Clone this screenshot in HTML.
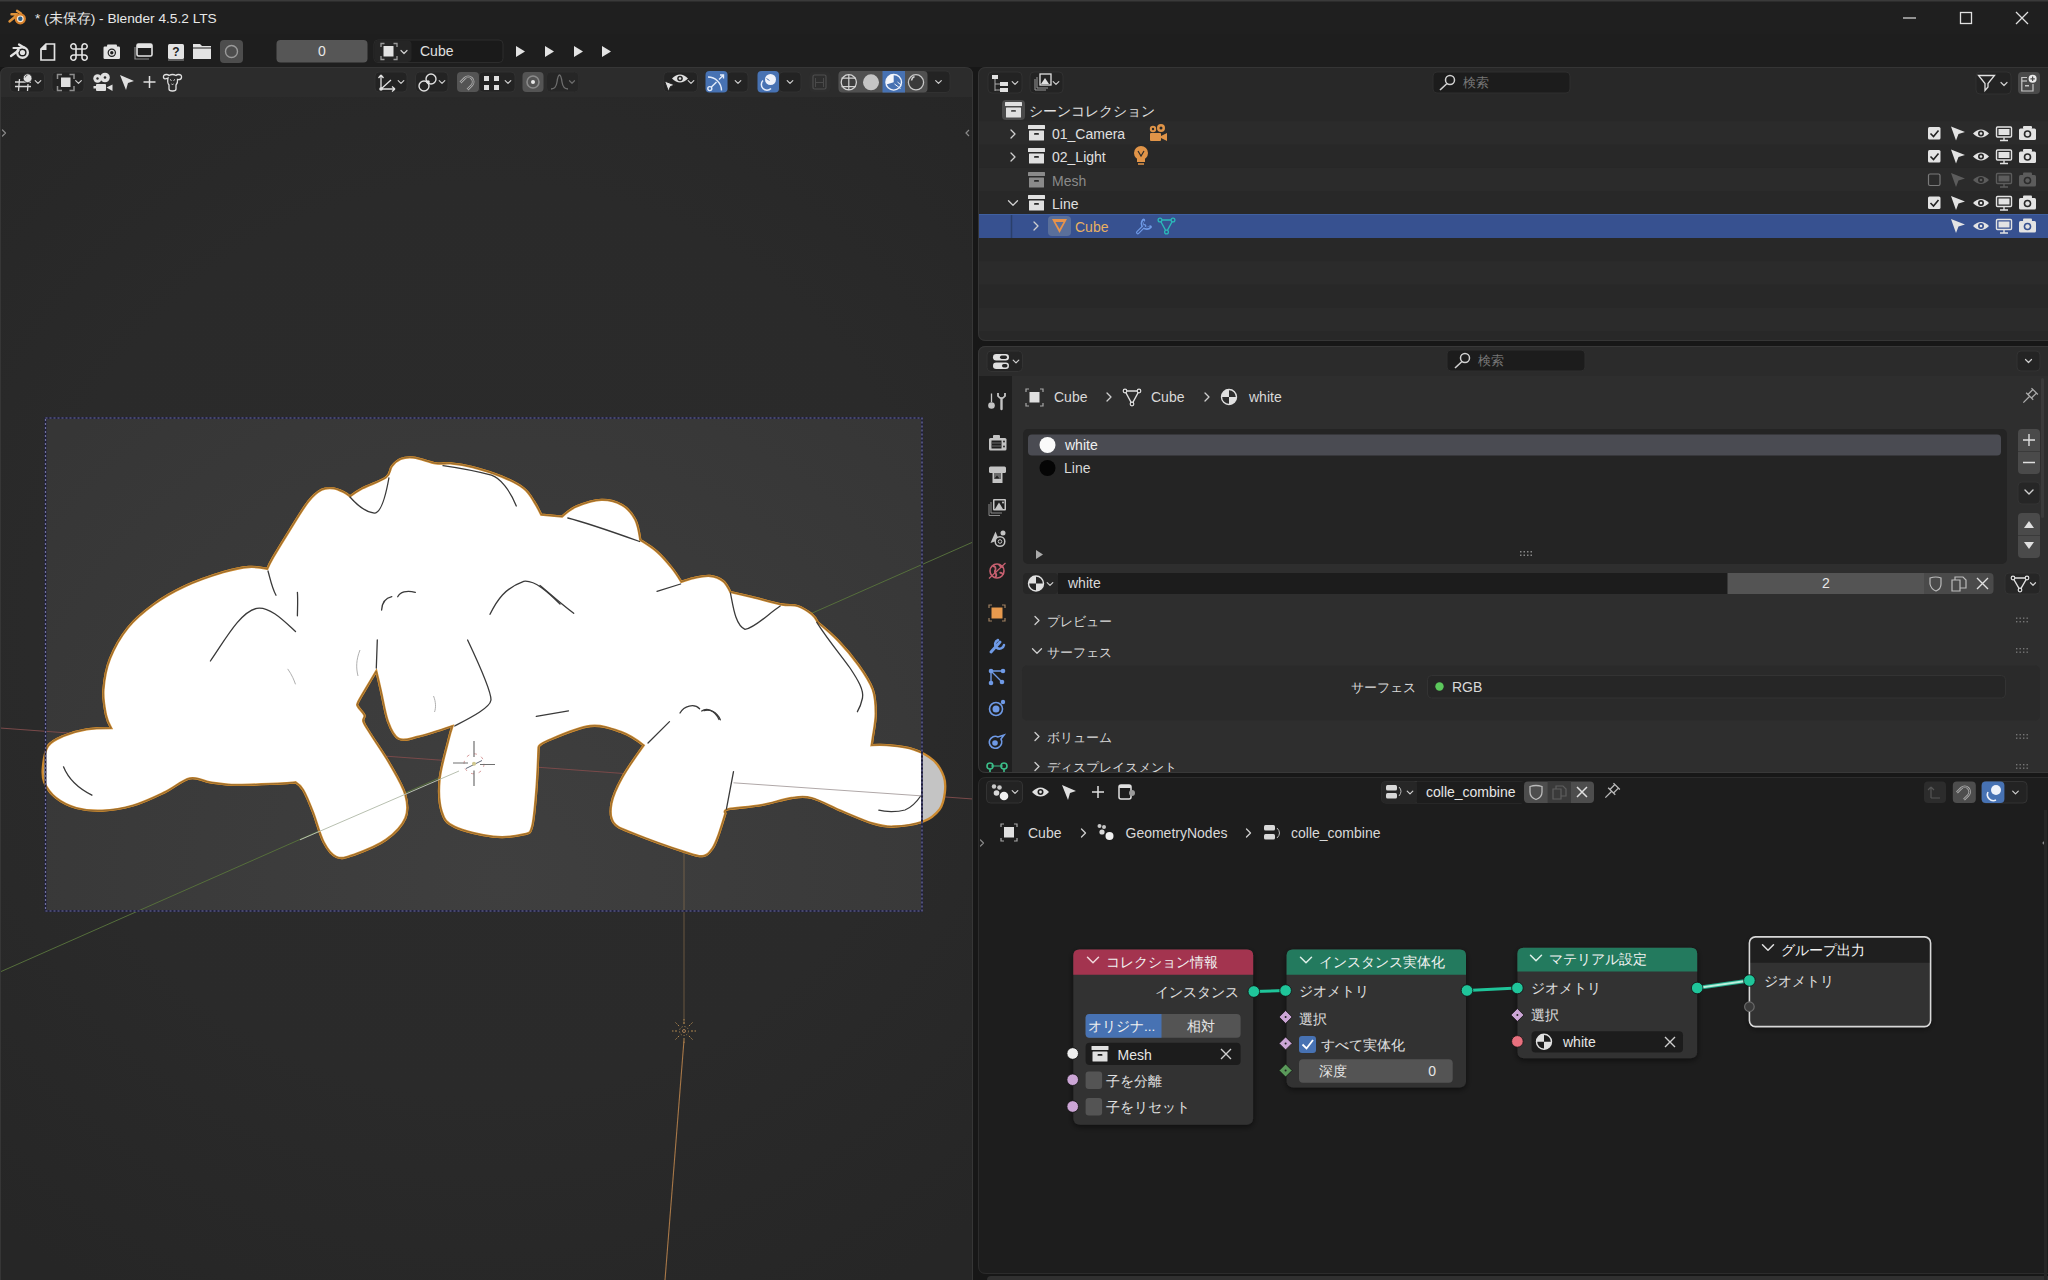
<!DOCTYPE html>
<html><head><meta charset="utf-8">
<style>
body{margin:0;width:2048px;height:1280px;overflow:hidden;background:#171717;position:relative}
svg{font-family:"Liberation Sans",sans-serif}
</style></head><body>
<svg width="2048" height="1280" viewBox="0 0 2048 1280" style="position:absolute;left:0;top:0"><rect x="0" y="0" width="2048" height="1280" rx="0" fill="#171717" />
<rect x="0" y="0" width="2048" height="34" rx="0" fill="#1f1f1f" />
<rect x="0" y="34" width="2048" height="33" rx="0" fill="#1e1e1e" />
<path d="M0,0.75 H2048" fill="none" stroke="#3a3a3a" stroke-width="1.5" />
<text x="35" y="23" font-size="13.7" fill="#e8e8e8" text-anchor="start" >* (未保存) - Blender 4.5.2 LTS</text>
<path d="M9.5,21.5 L16,16 M11.5,14.2 H17 M17,10.8 L21,13.5" fill="none" stroke="#e0933a" stroke-width="2.4" stroke-linecap="round"/>
<circle cx="20.3" cy="18.8" r="5.6" fill="#d9822b"/><circle cx="20.3" cy="18.8" r="3.4" fill="#fbe8d0"/><circle cx="20.3" cy="18.8" r="2.2" fill="#2a5d8a"/>
<path d="M1903,18 H1916" fill="none" stroke="#e0e0e0" stroke-width="1.2" />
<rect x="1960.5" y="12.5" width="11" height="11" rx="0" fill="none" stroke="#e0e0e0" stroke-width="1.3"/>
<path d="M2016,12 L2028,24 M2028,12 L2016,24" fill="none" stroke="#e0e0e0" stroke-width="1.3" />
<circle cx="22.5" cy="52.5" r="5.3" fill="none" stroke="#e3e3e3" stroke-width="2.4"/>
<circle cx="22.5" cy="52.5" r="2.6" fill="#e3e3e3"/>
<path d="M11,56 L18.5,50.5 M13.5,48 L19.5,48 M19,44.5 L24,47.5" fill="none" stroke="#e3e3e3" stroke-width="2.2" stroke-linecap="round"/>
<path d="M46,44 H54.5 V60 H41 V49 Z" fill="none" stroke="#e3e3e3" stroke-width="1.7" />
<path d="M40.5,50 L46.5,43.5 V50 Z" fill="#e3e3e3" stroke="none" stroke-width="1" />
<path d="M76,49 H82 V55 H76 Z M76,49 V46.5 A2.6,2.6 0 1 0 73.4,49 H76 M82,49 V46.5 A2.6,2.6 0 1 1 84.6,49 H82 M76,55 V57.5 A2.6,2.6 0 1 1 73.4,55 H76 M82,55 V57.5 A2.6,2.6 0 1 0 84.6,55 H82" fill="none" stroke="#e3e3e3" stroke-width="1.6" />
<rect x="103.5" y="46.5" width="16.5" height="12.5" rx="1.2" fill="#e3e3e3" />
<rect x="107" y="44.5" width="10" height="3" rx="1" fill="#e3e3e3" />
<circle cx="111.8" cy="52.7" r="4.2" fill="#1e1e1e"/><circle cx="111.8" cy="52.7" r="3" fill="#e3e3e3"/><circle cx="111.8" cy="52.7" r="1.7" fill="#1e1e1e"/>
<rect x="137" y="44" width="15" height="12" rx="1.5" fill="none" stroke="#e3e3e3" stroke-width="1.6"/>
<rect x="137" y="44" width="15" height="4" rx="1" fill="#e3e3e3" />
<path d="M135,47 V59 H149" fill="none" stroke="#8a8a8a" stroke-width="1.2" />
<rect x="168" y="44" width="16" height="15" rx="1.5" fill="#e3e3e3" />
<text x="176" y="56" font-size="12" fill="#1e1e1e" text-anchor="middle" font-weight="bold">?</text>
<path d="M168,60 H184" fill="none" stroke="#9a9a9a" stroke-width="1" />
<path d="M193,44 H200 L202,46 H211 V59 H193 Z" fill="#e3e3e3" stroke="none" stroke-width="1" />
<path d="M193,48 H211" fill="none" stroke="#1e1e1e" stroke-width="1" />
<rect x="220" y="40" width="23" height="23" rx="4" fill="#4d4d4d" />
<circle cx="231.5" cy="51.5" r="6" fill="none" stroke="#9a9a9a" stroke-width="1.4"/>
<rect x="276.5" y="40" width="91" height="22.5" rx="4" fill="#565656" />
<text x="322" y="56" font-size="14" fill="#e8e8e8" text-anchor="middle" >0</text>
<rect x="374" y="40" width="129" height="22.5" rx="4" fill="#1a1a1a" stroke="#2c2c2c" stroke-width="1"/>
<rect x="374.5" y="40.5" width="37" height="21.5" rx="4" fill="#252525" />
<path d="M381,47 V43.5 H384.5 M393.5,43.5 H397 V47 M381,56 V59.5 H384.5 M393.5,59.5 H397 V56" fill="none" stroke="#9a9a9a" stroke-width="1.3" />
<rect x="383.5" y="46" width="10" height="10.5" rx="0" fill="#e3e3e3" />
<path d="M401,50.5 L404,53.5 L407,50.5" fill="none" stroke="#cfcfcf" stroke-width="1.2" stroke-linecap="round" stroke-linejoin="round"/>
<text x="420" y="56" font-size="14" fill="#e0e0e0" text-anchor="start" >Cube</text>
<path d="M516,46 L525,51.5 L516,57 Z" fill="#e3e3e3" stroke="none" stroke-width="1" />
<path d="M545,46 L554,51.5 L545,57 Z" fill="#e3e3e3" stroke="none" stroke-width="1" />
<path d="M574,46 L583,51.5 L574,57 Z" fill="#e3e3e3" stroke="none" stroke-width="1" />
<path d="M602,46 L611,51.5 L602,57 Z" fill="#e3e3e3" stroke="none" stroke-width="1" />
<defs><clipPath id="vpclip"><path d="M0,75 Q0,67 8,67 H965 Q973,67 973,75 V1280 H0 Z"/></clipPath><clipPath id="cam2"><rect x="45.5" y="418" width="876.5" height="493"/></clipPath><radialGradient id="vpg" cx="0.5" cy="0.6" r="0.7"><stop offset="0" stop-color="#2c2c2c"/><stop offset="1" stop-color="#282828"/></radialGradient></defs>
<g clip-path="url(#vpclip)">
<defs><linearGradient id="vpbg" x1="0" y1="0" x2="0" y2="1"><stop offset="0" stop-color="#272727"/><stop offset="1" stop-color="#262626"/></linearGradient></defs>
<rect x="0" y="67" width="973" height="1213" rx="0" fill="url(#vpbg)" />
<rect x="0" y="67" width="973" height="30.5" rx="0" fill="#2c2c2c" />
<defs><radialGradient id="camg" gradientUnits="userSpaceOnUse" cx="500" cy="880" r="620"><stop offset="0" stop-color="#3f3f3f"/><stop offset="0.6" stop-color="#3a3a3a"/><stop offset="1" stop-color="#363636"/></radialGradient><radialGradient id="vpg2" gradientUnits="userSpaceOnUse" cx="486" cy="640" r="760"><stop offset="0" stop-color="#2b2b2b"/><stop offset="0.6" stop-color="#2a2a2a"/><stop offset="1" stop-color="#262626"/></radialGradient></defs>
<rect x="0" y="97" width="973" height="1183" rx="0" fill="url(#vpg2)" />
<rect x="45.5" y="418" width="876.5" height="493" rx="0" fill="url(#camg)" />
<line x1="0" y1="972" x2="973" y2="542" stroke="#566f3c" stroke-width="1"/>
<line x1="0" y1="728" x2="973" y2="799" stroke="#7a4a4a" stroke-width="1"/>
<line x1="684" y1="850" x2="684" y2="1024" stroke="#9a7a50" stroke-width="0.8" opacity="0.7"/>
<line x1="691.0" y1="1031.0" x2="696.0" y2="1031.0" stroke="#b08850" stroke-width="1" stroke-dasharray="2,1.5"/>
<line x1="688.9" y1="1035.9" x2="692.5" y2="1039.5" stroke="#b08850" stroke-width="1" stroke-dasharray="2,1.5"/>
<line x1="684.0" y1="1038.0" x2="684.0" y2="1043.0" stroke="#b08850" stroke-width="1" stroke-dasharray="2,1.5"/>
<line x1="679.1" y1="1035.9" x2="675.5" y2="1039.5" stroke="#b08850" stroke-width="1" stroke-dasharray="2,1.5"/>
<line x1="677.0" y1="1031.0" x2="672.0" y2="1031.0" stroke="#b08850" stroke-width="1" stroke-dasharray="2,1.5"/>
<line x1="679.1" y1="1026.1" x2="675.5" y2="1022.5" stroke="#b08850" stroke-width="1" stroke-dasharray="2,1.5"/>
<line x1="684.0" y1="1024.0" x2="684.0" y2="1019.0" stroke="#b08850" stroke-width="1" stroke-dasharray="2,1.5"/>
<line x1="688.9" y1="1026.1" x2="692.5" y2="1022.5" stroke="#b08850" stroke-width="1" stroke-dasharray="2,1.5"/>
<circle cx="684" cy="1031" r="4.5" fill="none" stroke="#a08050" stroke-width="0.8" stroke-dasharray="1.5,1.5"/><circle cx="684" cy="1031" r="1.5" fill="none" stroke="#c09060" stroke-width="0.8"/>
<line x1="684" y1="1040" x2="665" y2="1280" stroke="#a87848" stroke-width="1.1"/>
<path d="M42.9,766.8 C43.5,760.8 44.6,751.1 48.0,746.0 C51.4,740.9 57.0,738.8 63.5,736.0 C70.0,733.2 78.8,730.7 86.7,729.4 C94.7,728.1 111.2,728.1 111.2,728.1 C111.2,728.1 107.3,721.4 106.0,715.0 C104.7,708.6 102.8,698.9 103.5,689.5 C104.2,680.1 105.9,668.9 110.0,658.6 C114.1,648.3 120.7,636.6 128.0,627.6 C135.3,618.6 144.3,611.3 153.7,604.4 C163.1,597.5 173.0,591.8 184.6,586.4 C196.2,581.0 212.6,575.4 223.3,572.2 C234.0,569.0 241.7,567.5 249.0,567.0 C256.3,566.5 267.3,568.9 267.3,568.9 C267.3,568.9 269.5,563.6 273.2,557.2 C276.9,550.9 283.4,540.1 289.3,530.8 C295.2,521.5 302.9,508.3 308.3,501.5 C313.7,494.7 317.4,492.0 321.5,489.8 C325.6,487.6 329.5,487.9 333.2,488.3 C336.9,488.7 340.7,490.6 343.5,492.0 C346.3,493.4 350.0,496.4 350.0,496.4 C350.0,496.4 356.5,491.5 362.5,488.3 C368.5,485.1 381.1,481.0 386.0,477.4 C390.9,473.8 389.4,469.5 391.8,466.4 C394.2,463.3 396.9,460.5 400.6,459.0 C404.3,457.5 407.9,456.9 413.8,457.6 C419.7,458.3 429.7,462.4 435.8,463.4 C441.9,464.4 444.3,462.8 450.4,463.4 C456.5,464.0 463.8,464.9 472.4,467.1 C480.9,469.3 493.1,473.1 501.7,476.6 C510.2,480.1 518.3,484.2 523.7,488.3 C529.1,492.4 531.1,497.1 534.0,501.5 C536.9,505.9 541.2,514.7 541.2,514.7 C541.2,514.7 562.0,516.6 562.0,516.6 C562.0,516.6 570.0,509.2 576.6,506.4 C583.2,503.6 593.9,500.0 601.5,499.8 C609.1,499.6 616.4,501.7 622.0,505.0 C627.6,508.3 632.2,513.7 635.2,519.5 C638.2,525.3 640.3,540.0 640.3,540.0 C640.3,540.0 652.0,547.1 657.2,551.8 C662.5,556.4 667.8,562.9 671.8,567.9 C675.8,572.9 681.3,581.8 681.3,581.8 C681.3,581.8 689.0,579.1 693.8,578.1 C698.6,577.1 705.1,575.5 710.0,576.0 C714.9,576.5 719.6,578.3 723.0,581.0 C726.4,583.7 730.4,592.0 730.4,592.0 C730.4,592.0 743.8,595.1 752.4,597.2 C761.0,599.3 774.2,603.0 781.7,604.5 C789.2,606.0 792.5,604.4 797.5,606.0 C802.5,607.6 808.3,611.5 811.7,614.2 C815.1,616.9 817.8,622.3 817.8,622.3 C817.8,622.3 831.3,633.5 838.1,640.6 C844.9,647.7 852.6,656.9 858.4,665.0 C864.2,673.1 869.8,681.3 872.7,689.4 C875.6,697.5 875.7,705.7 875.7,713.8 C875.7,721.9 873.4,732.8 872.7,738.0 C872.0,743.2 871.6,745.2 871.6,745.2 C871.6,745.2 880.0,744.5 886.9,745.2 C893.8,745.9 905.5,746.8 913.3,749.3 C921.1,751.8 928.5,755.9 933.6,760.5 C938.7,765.1 941.9,771.3 943.8,776.7 C945.7,782.1 945.5,787.6 944.8,793.0 C944.1,798.4 943.3,804.5 939.7,809.2 C936.1,813.9 931.2,818.5 923.4,821.4 C915.6,824.3 901.5,826.2 893.0,826.5 C884.5,826.8 881.2,825.9 872.7,823.4 C864.2,820.9 852.4,815.5 842.2,811.3 C832.0,807.1 820.2,800.2 811.7,798.0 C803.2,795.8 799.9,796.8 791.4,798.0 C782.9,799.2 771.5,803.3 761.0,805.2 C750.5,807.1 734.3,807.9 728.4,809.2 C722.5,810.6 725.4,813.3 725.4,813.3 C725.4,813.3 720.4,829.8 718.3,835.6 C716.1,841.5 714.9,845.0 712.5,848.4 C710.1,851.8 708.2,855.2 703.9,855.9 C699.6,856.6 698.5,856.5 686.7,852.7 C674.9,848.9 645.2,838.3 633.0,833.3 C620.8,828.3 617.2,827.6 613.6,822.6 C610.0,817.6 610.1,810.8 611.5,803.3 C612.9,795.8 616.8,787.2 622.2,777.5 C627.6,767.8 643.7,745.3 643.7,745.3 C643.7,745.3 631.2,735.6 622.2,732.4 C613.2,729.2 602.5,724.6 590.0,726.0 C577.5,727.4 555.6,737.4 547.0,741.0 C538.4,744.6 538.5,747.4 538.5,747.4 C538.5,747.4 537.4,777.1 536.3,790.4 C535.2,803.6 534.1,819.6 532.0,826.9 C529.9,834.2 529.9,832.8 523.4,834.4 C516.9,836.0 504.8,837.9 493.3,836.6 C481.9,835.4 463.3,831.0 454.7,826.9 C446.1,822.8 444.3,819.8 441.8,811.9 C439.3,804.0 438.5,791.4 439.6,779.6 C440.7,767.8 446.1,749.9 448.2,741.0 C450.3,732.1 452.5,726.0 452.5,726.0 C452.5,726.0 427.1,734.6 418.2,736.7 C409.2,738.8 403.8,741.3 398.8,738.8 C393.8,736.3 391.0,729.8 388.0,721.6 C385.0,713.4 382.6,697.8 380.6,689.4 C378.7,681.0 376.3,671.1 376.3,671.1 C376.3,671.1 369.7,682.1 366.6,687.3 C363.6,692.5 359.4,699.1 358.0,702.3 C356.6,705.5 356.9,704.5 358.0,706.6 C359.1,708.8 363.5,712.7 364.4,715.2 C365.3,717.7 362.3,718.4 363.4,721.6 C364.5,724.8 366.4,727.3 370.9,734.5 C375.4,741.7 384.5,754.6 390.2,764.6 C395.9,774.6 402.8,785.8 405.3,794.7 C407.8,803.7 408.5,810.8 405.3,818.3 C402.1,825.8 394.6,833.7 386.0,839.8 C377.4,845.9 361.9,851.9 353.7,854.8 C345.4,857.7 341.5,859.1 336.5,857.0 C331.5,854.9 327.5,849.5 323.6,842.0 C319.7,834.5 316.3,820.6 312.9,811.9 C309.5,803.2 306.1,794.9 303.2,790.0 C300.3,785.1 295.5,782.3 295.5,782.3 C295.5,782.3 287.3,783.2 277.4,783.6 C267.5,784.0 247.4,785.1 236.2,784.9 C225.0,784.7 218.1,783.4 210.4,782.3 C202.7,781.2 197.5,776.7 189.8,778.4 C182.1,780.1 173.5,788.1 164.0,792.6 C154.5,797.1 143.3,802.5 133.0,805.5 C122.7,808.5 111.4,810.2 102.0,810.6 C92.6,811.0 84.1,810.1 76.4,808.0 C68.7,805.9 61.2,802.0 55.8,797.7 C50.4,793.4 46.4,787.4 44.2,782.3 C42.1,777.1 42.3,772.8 42.9,766.8Z" fill="#c4c4c4" stroke="#cc8a30" stroke-width="2.3" />
<g clip-path="url(#cam2)">
<path d="M42.9,766.8 C43.5,760.8 44.6,751.1 48.0,746.0 C51.4,740.9 57.0,738.8 63.5,736.0 C70.0,733.2 78.8,730.7 86.7,729.4 C94.7,728.1 111.2,728.1 111.2,728.1 C111.2,728.1 107.3,721.4 106.0,715.0 C104.7,708.6 102.8,698.9 103.5,689.5 C104.2,680.1 105.9,668.9 110.0,658.6 C114.1,648.3 120.7,636.6 128.0,627.6 C135.3,618.6 144.3,611.3 153.7,604.4 C163.1,597.5 173.0,591.8 184.6,586.4 C196.2,581.0 212.6,575.4 223.3,572.2 C234.0,569.0 241.7,567.5 249.0,567.0 C256.3,566.5 267.3,568.9 267.3,568.9 C267.3,568.9 269.5,563.6 273.2,557.2 C276.9,550.9 283.4,540.1 289.3,530.8 C295.2,521.5 302.9,508.3 308.3,501.5 C313.7,494.7 317.4,492.0 321.5,489.8 C325.6,487.6 329.5,487.9 333.2,488.3 C336.9,488.7 340.7,490.6 343.5,492.0 C346.3,493.4 350.0,496.4 350.0,496.4 C350.0,496.4 356.5,491.5 362.5,488.3 C368.5,485.1 381.1,481.0 386.0,477.4 C390.9,473.8 389.4,469.5 391.8,466.4 C394.2,463.3 396.9,460.5 400.6,459.0 C404.3,457.5 407.9,456.9 413.8,457.6 C419.7,458.3 429.7,462.4 435.8,463.4 C441.9,464.4 444.3,462.8 450.4,463.4 C456.5,464.0 463.8,464.9 472.4,467.1 C480.9,469.3 493.1,473.1 501.7,476.6 C510.2,480.1 518.3,484.2 523.7,488.3 C529.1,492.4 531.1,497.1 534.0,501.5 C536.9,505.9 541.2,514.7 541.2,514.7 C541.2,514.7 562.0,516.6 562.0,516.6 C562.0,516.6 570.0,509.2 576.6,506.4 C583.2,503.6 593.9,500.0 601.5,499.8 C609.1,499.6 616.4,501.7 622.0,505.0 C627.6,508.3 632.2,513.7 635.2,519.5 C638.2,525.3 640.3,540.0 640.3,540.0 C640.3,540.0 652.0,547.1 657.2,551.8 C662.5,556.4 667.8,562.9 671.8,567.9 C675.8,572.9 681.3,581.8 681.3,581.8 C681.3,581.8 689.0,579.1 693.8,578.1 C698.6,577.1 705.1,575.5 710.0,576.0 C714.9,576.5 719.6,578.3 723.0,581.0 C726.4,583.7 730.4,592.0 730.4,592.0 C730.4,592.0 743.8,595.1 752.4,597.2 C761.0,599.3 774.2,603.0 781.7,604.5 C789.2,606.0 792.5,604.4 797.5,606.0 C802.5,607.6 808.3,611.5 811.7,614.2 C815.1,616.9 817.8,622.3 817.8,622.3 C817.8,622.3 831.3,633.5 838.1,640.6 C844.9,647.7 852.6,656.9 858.4,665.0 C864.2,673.1 869.8,681.3 872.7,689.4 C875.6,697.5 875.7,705.7 875.7,713.8 C875.7,721.9 873.4,732.8 872.7,738.0 C872.0,743.2 871.6,745.2 871.6,745.2 C871.6,745.2 880.0,744.5 886.9,745.2 C893.8,745.9 905.5,746.8 913.3,749.3 C921.1,751.8 928.5,755.9 933.6,760.5 C938.7,765.1 941.9,771.3 943.8,776.7 C945.7,782.1 945.5,787.6 944.8,793.0 C944.1,798.4 943.3,804.5 939.7,809.2 C936.1,813.9 931.2,818.5 923.4,821.4 C915.6,824.3 901.5,826.2 893.0,826.5 C884.5,826.8 881.2,825.9 872.7,823.4 C864.2,820.9 852.4,815.5 842.2,811.3 C832.0,807.1 820.2,800.2 811.7,798.0 C803.2,795.8 799.9,796.8 791.4,798.0 C782.9,799.2 771.5,803.3 761.0,805.2 C750.5,807.1 734.3,807.9 728.4,809.2 C722.5,810.6 725.4,813.3 725.4,813.3 C725.4,813.3 720.4,829.8 718.3,835.6 C716.1,841.5 714.9,845.0 712.5,848.4 C710.1,851.8 708.2,855.2 703.9,855.9 C699.6,856.6 698.5,856.5 686.7,852.7 C674.9,848.9 645.2,838.3 633.0,833.3 C620.8,828.3 617.2,827.6 613.6,822.6 C610.0,817.6 610.1,810.8 611.5,803.3 C612.9,795.8 616.8,787.2 622.2,777.5 C627.6,767.8 643.7,745.3 643.7,745.3 C643.7,745.3 631.2,735.6 622.2,732.4 C613.2,729.2 602.5,724.6 590.0,726.0 C577.5,727.4 555.6,737.4 547.0,741.0 C538.4,744.6 538.5,747.4 538.5,747.4 C538.5,747.4 537.4,777.1 536.3,790.4 C535.2,803.6 534.1,819.6 532.0,826.9 C529.9,834.2 529.9,832.8 523.4,834.4 C516.9,836.0 504.8,837.9 493.3,836.6 C481.9,835.4 463.3,831.0 454.7,826.9 C446.1,822.8 444.3,819.8 441.8,811.9 C439.3,804.0 438.5,791.4 439.6,779.6 C440.7,767.8 446.1,749.9 448.2,741.0 C450.3,732.1 452.5,726.0 452.5,726.0 C452.5,726.0 427.1,734.6 418.2,736.7 C409.2,738.8 403.8,741.3 398.8,738.8 C393.8,736.3 391.0,729.8 388.0,721.6 C385.0,713.4 382.6,697.8 380.6,689.4 C378.7,681.0 376.3,671.1 376.3,671.1 C376.3,671.1 369.7,682.1 366.6,687.3 C363.6,692.5 359.4,699.1 358.0,702.3 C356.6,705.5 356.9,704.5 358.0,706.6 C359.1,708.8 363.5,712.7 364.4,715.2 C365.3,717.7 362.3,718.4 363.4,721.6 C364.5,724.8 366.4,727.3 370.9,734.5 C375.4,741.7 384.5,754.6 390.2,764.6 C395.9,774.6 402.8,785.8 405.3,794.7 C407.8,803.7 408.5,810.8 405.3,818.3 C402.1,825.8 394.6,833.7 386.0,839.8 C377.4,845.9 361.9,851.9 353.7,854.8 C345.4,857.7 341.5,859.1 336.5,857.0 C331.5,854.9 327.5,849.5 323.6,842.0 C319.7,834.5 316.3,820.6 312.9,811.9 C309.5,803.2 306.1,794.9 303.2,790.0 C300.3,785.1 295.5,782.3 295.5,782.3 C295.5,782.3 287.3,783.2 277.4,783.6 C267.5,784.0 247.4,785.1 236.2,784.9 C225.0,784.7 218.1,783.4 210.4,782.3 C202.7,781.2 197.5,776.7 189.8,778.4 C182.1,780.1 173.5,788.1 164.0,792.6 C154.5,797.1 143.3,802.5 133.0,805.5 C122.7,808.5 111.4,810.2 102.0,810.6 C92.6,811.0 84.1,810.1 76.4,808.0 C68.7,805.9 61.2,802.0 55.8,797.7 C50.4,793.4 46.4,787.4 44.2,782.3 C42.1,777.1 42.3,772.8 42.9,766.8Z" fill="#ffffff" stroke="#cc8a30" stroke-width="2.3" />
<path d="M42.9,766.8 C43.5,760.8 44.6,751.1 48.0,746.0 C51.4,740.9 57.0,738.8 63.5,736.0 C70.0,733.2 78.8,730.7 86.7,729.4 C94.7,728.1 111.2,728.1 111.2,728.1 C111.2,728.1 107.3,721.4 106.0,715.0 C104.7,708.6 102.8,698.9 103.5,689.5 C104.2,680.1 105.9,668.9 110.0,658.6 C114.1,648.3 120.7,636.6 128.0,627.6 C135.3,618.6 144.3,611.3 153.7,604.4 C163.1,597.5 173.0,591.8 184.6,586.4 C196.2,581.0 212.6,575.4 223.3,572.2 C234.0,569.0 241.7,567.5 249.0,567.0 C256.3,566.5 267.3,568.9 267.3,568.9 C267.3,568.9 269.5,563.6 273.2,557.2 C276.9,550.9 283.4,540.1 289.3,530.8 C295.2,521.5 302.9,508.3 308.3,501.5 C313.7,494.7 317.4,492.0 321.5,489.8 C325.6,487.6 329.5,487.9 333.2,488.3 C336.9,488.7 340.7,490.6 343.5,492.0 C346.3,493.4 350.0,496.4 350.0,496.4 C350.0,496.4 356.5,491.5 362.5,488.3 C368.5,485.1 381.1,481.0 386.0,477.4 C390.9,473.8 389.4,469.5 391.8,466.4 C394.2,463.3 396.9,460.5 400.6,459.0 C404.3,457.5 407.9,456.9 413.8,457.6 C419.7,458.3 429.7,462.4 435.8,463.4 C441.9,464.4 444.3,462.8 450.4,463.4 C456.5,464.0 463.8,464.9 472.4,467.1 C480.9,469.3 493.1,473.1 501.7,476.6 C510.2,480.1 518.3,484.2 523.7,488.3 C529.1,492.4 531.1,497.1 534.0,501.5 C536.9,505.9 541.2,514.7 541.2,514.7 C541.2,514.7 562.0,516.6 562.0,516.6 C562.0,516.6 570.0,509.2 576.6,506.4 C583.2,503.6 593.9,500.0 601.5,499.8 C609.1,499.6 616.4,501.7 622.0,505.0 C627.6,508.3 632.2,513.7 635.2,519.5 C638.2,525.3 640.3,540.0 640.3,540.0 C640.3,540.0 652.0,547.1 657.2,551.8 C662.5,556.4 667.8,562.9 671.8,567.9 C675.8,572.9 681.3,581.8 681.3,581.8 C681.3,581.8 689.0,579.1 693.8,578.1 C698.6,577.1 705.1,575.5 710.0,576.0 C714.9,576.5 719.6,578.3 723.0,581.0 C726.4,583.7 730.4,592.0 730.4,592.0 C730.4,592.0 743.8,595.1 752.4,597.2 C761.0,599.3 774.2,603.0 781.7,604.5 C789.2,606.0 792.5,604.4 797.5,606.0 C802.5,607.6 808.3,611.5 811.7,614.2 C815.1,616.9 817.8,622.3 817.8,622.3 C817.8,622.3 831.3,633.5 838.1,640.6 C844.9,647.7 852.6,656.9 858.4,665.0 C864.2,673.1 869.8,681.3 872.7,689.4 C875.6,697.5 875.7,705.7 875.7,713.8 C875.7,721.9 873.4,732.8 872.7,738.0 C872.0,743.2 871.6,745.2 871.6,745.2 C871.6,745.2 880.0,744.5 886.9,745.2 C893.8,745.9 905.5,746.8 913.3,749.3 C921.1,751.8 928.5,755.9 933.6,760.5 C938.7,765.1 941.9,771.3 943.8,776.7 C945.7,782.1 945.5,787.6 944.8,793.0 C944.1,798.4 943.3,804.5 939.7,809.2 C936.1,813.9 931.2,818.5 923.4,821.4 C915.6,824.3 901.5,826.2 893.0,826.5 C884.5,826.8 881.2,825.9 872.7,823.4 C864.2,820.9 852.4,815.5 842.2,811.3 C832.0,807.1 820.2,800.2 811.7,798.0 C803.2,795.8 799.9,796.8 791.4,798.0 C782.9,799.2 771.5,803.3 761.0,805.2 C750.5,807.1 734.3,807.9 728.4,809.2 C722.5,810.6 725.4,813.3 725.4,813.3 C725.4,813.3 720.4,829.8 718.3,835.6 C716.1,841.5 714.9,845.0 712.5,848.4 C710.1,851.8 708.2,855.2 703.9,855.9 C699.6,856.6 698.5,856.5 686.7,852.7 C674.9,848.9 645.2,838.3 633.0,833.3 C620.8,828.3 617.2,827.6 613.6,822.6 C610.0,817.6 610.1,810.8 611.5,803.3 C612.9,795.8 616.8,787.2 622.2,777.5 C627.6,767.8 643.7,745.3 643.7,745.3 C643.7,745.3 631.2,735.6 622.2,732.4 C613.2,729.2 602.5,724.6 590.0,726.0 C577.5,727.4 555.6,737.4 547.0,741.0 C538.4,744.6 538.5,747.4 538.5,747.4 C538.5,747.4 537.4,777.1 536.3,790.4 C535.2,803.6 534.1,819.6 532.0,826.9 C529.9,834.2 529.9,832.8 523.4,834.4 C516.9,836.0 504.8,837.9 493.3,836.6 C481.9,835.4 463.3,831.0 454.7,826.9 C446.1,822.8 444.3,819.8 441.8,811.9 C439.3,804.0 438.5,791.4 439.6,779.6 C440.7,767.8 446.1,749.9 448.2,741.0 C450.3,732.1 452.5,726.0 452.5,726.0 C452.5,726.0 427.1,734.6 418.2,736.7 C409.2,738.8 403.8,741.3 398.8,738.8 C393.8,736.3 391.0,729.8 388.0,721.6 C385.0,713.4 382.6,697.8 380.6,689.4 C378.7,681.0 376.3,671.1 376.3,671.1 C376.3,671.1 369.7,682.1 366.6,687.3 C363.6,692.5 359.4,699.1 358.0,702.3 C356.6,705.5 356.9,704.5 358.0,706.6 C359.1,708.8 363.5,712.7 364.4,715.2 C365.3,717.7 362.3,718.4 363.4,721.6 C364.5,724.8 366.4,727.3 370.9,734.5 C375.4,741.7 384.5,754.6 390.2,764.6 C395.9,774.6 402.8,785.8 405.3,794.7 C407.8,803.7 408.5,810.8 405.3,818.3 C402.1,825.8 394.6,833.7 386.0,839.8 C377.4,845.9 361.9,851.9 353.7,854.8 C345.4,857.7 341.5,859.1 336.5,857.0 C331.5,854.9 327.5,849.5 323.6,842.0 C319.7,834.5 316.3,820.6 312.9,811.9 C309.5,803.2 306.1,794.9 303.2,790.0 C300.3,785.1 295.5,782.3 295.5,782.3 C295.5,782.3 287.3,783.2 277.4,783.6 C267.5,784.0 247.4,785.1 236.2,784.9 C225.0,784.7 218.1,783.4 210.4,782.3 C202.7,781.2 197.5,776.7 189.8,778.4 C182.1,780.1 173.5,788.1 164.0,792.6 C154.5,797.1 143.3,802.5 133.0,805.5 C122.7,808.5 111.4,810.2 102.0,810.6 C92.6,811.0 84.1,810.1 76.4,808.0 C68.7,805.9 61.2,802.0 55.8,797.7 C50.4,793.4 46.4,787.4 44.2,782.3 C42.1,777.1 42.3,772.8 42.9,766.8Z" fill="none" stroke="#7a5a30" stroke-width="0.7" />
<path d="M287.7,668.9 C292,675 294,680 295.5,684.3" fill="none" stroke="#b0b0b0" stroke-width="1" />
<path d="M433.5,696 C436,702 436,708 434.5,712" fill="none" stroke="#b0b0b0" stroke-width="1" />
<path d="M360,650 C356,660 356,668 358,676" fill="none" stroke="#b0b0b0" stroke-width="1" />
<path d="M350,497 C357,505 366,512 374.3,513.2 C380,513 385,500 388.9,478" fill="none" stroke="#3a3a3a" stroke-width="1.3" stroke-linecap="round"/>
<path d="M443,465.6 C460,468 480,472 491.4,475.2 C500,478 510,490 516.3,506" fill="none" stroke="#3a3a3a" stroke-width="1.3" stroke-linecap="round"/>
<path d="M268,571 C270,578 272,588 276,595.3" fill="none" stroke="#3a3a3a" stroke-width="1.3" stroke-linecap="round"/>
<path d="M297.4,592.3 C298,600 297.5,608 297.4,615.8" fill="none" stroke="#3a3a3a" stroke-width="1.3" stroke-linecap="round"/>
<path d="M381.6,610 C382,603 386,598 391.8,596.7 M397.7,596.7 C400,592 406.5,590 415.3,592.3" fill="none" stroke="#3a3a3a" stroke-width="1.3" stroke-linecap="round"/>
<path d="M490,614.3 C497,600 505,588 523.7,581.3 C535,580 548,592 560,604" fill="none" stroke="#3a3a3a" stroke-width="1.3" stroke-linecap="round"/>
<path d="M567.8,518 C580,521 598.6,526.9 639.6,541.5" fill="none" stroke="#3a3a3a" stroke-width="1.3" stroke-linecap="round"/>
<path d="M540,585.5 C548,592 560,603 573.7,613.3" fill="none" stroke="#3a3a3a" stroke-width="1.3" stroke-linecap="round"/>
<path d="M657,591.3 L680.6,584" fill="none" stroke="#3a3a3a" stroke-width="1.3" stroke-linecap="round"/>
<path d="M730.4,592.8 C733,605 735,625 745,629.4 C755,628 768,614 780.2,606" fill="none" stroke="#3a3a3a" stroke-width="1.3" stroke-linecap="round"/>
<path d="M816.8,622.3 C828,640 842.2,656.9 850,668 C858,680 864,690 862.5,698 C861,705 859,709 857.4,711.7" fill="none" stroke="#3a3a3a" stroke-width="1.3" stroke-linecap="round"/>
<path d="M704,710.7 C710,709 717,712 720.3,719.8" fill="none" stroke="#3a3a3a" stroke-width="1.3" stroke-linecap="round"/>
<path d="M733.5,771.6 L726.4,809.2" fill="none" stroke="#3a3a3a" stroke-width="1.3" stroke-linecap="round"/>
<path d="M878.8,810.2 C885,812 897,812.3 905,810 C913,807 918,800 921.4,795" fill="none" stroke="#3a3a3a" stroke-width="1.3" stroke-linecap="round"/>
<path d="M377.3,640 L376.3,668" fill="none" stroke="#3a3a3a" stroke-width="1.3" stroke-linecap="round"/>
<path d="M467.6,640 C478,662 491.2,691.6 491,700 C490,708 470,718 454.7,726" fill="none" stroke="#3a3a3a" stroke-width="1.3" stroke-linecap="round"/>
<path d="M536.3,716.3 L568.5,710.9" fill="none" stroke="#3a3a3a" stroke-width="1.3" stroke-linecap="round"/>
<path d="M648,743 L669.5,721.6" fill="none" stroke="#3a3a3a" stroke-width="1.3" stroke-linecap="round"/>
<path d="M680,713 C684,706 694,703 699.6,708.7 M701.7,711 C706,708 714,709 719,719.5" fill="none" stroke="#3a3a3a" stroke-width="1.3" stroke-linecap="round"/>
<path d="M63.5,766.8 C68,778 76.4,787.4 91.9,795.2" fill="none" stroke="#3a3a3a" stroke-width="1.3" stroke-linecap="round"/>
<path d="M210.4,661 C225,640 240,612 256.8,608.3 C270,606 285,622 295.5,631.5" fill="none" stroke="#3a3a3a" stroke-width="1.3" stroke-linecap="round"/>
</g>
<line x1="300" y1="839.8" x2="459" y2="771" stroke="#b8c0b0" stroke-width="1"/>
<line x1="733.5" y1="782.8" x2="923.4" y2="796" stroke="#b0a8a8" stroke-width="1"/>
<rect x="45.5" y="418" width="876.5" height="493" rx="0" fill="none" stroke="#20203a" stroke-width="2"/>
<rect x="45.5" y="418" width="876.5" height="493" rx="0" fill="none" stroke="#7070a0" stroke-width="1.2" stroke-dasharray="2,2"/>
<path d="M972.5,1280 V75 Q972.5,67.5 965,67.5 H8 Q0.5,67.5 0.5,75 V1280" fill="none" stroke="#363636" stroke-width="1" />
</g>
<rect x="10" y="72" width="34.5" height="20" rx="4" fill="#232323" stroke="#313131" stroke-width="1"/>
<path d="M15,82 H31 M15,86.5 H31 M19.5,79 L18.5,91 M28,84 L27.5,91" fill="none" stroke="#d8d8d8" stroke-width="1.3" />
<circle cx="27.6" cy="78.2" r="4.4" fill="#e0e0e0" stroke="#232323" stroke-width="0.8"/>
<path d="M25.2,77.5 A2.6,2.6 0 0 1 27.5,75.2" fill="none" stroke="#555" stroke-width="0.9" />
<path d="M35.2,80.6 L38,83.4 L40.8,80.6" fill="none" stroke="#cfcfcf" stroke-width="1.2" stroke-linecap="round" stroke-linejoin="round"/>
<rect x="52" y="72" width="32" height="20" rx="4" fill="#232323" stroke="#313131" stroke-width="1"/>
<path d="M57.5,79 V74.5 H62 M69.5,74.5 H74 V79 M57.5,86 V90.5 H62 M69.5,90.5 H74 V86" fill="none" stroke="#8e8e8e" stroke-width="1.5" />
<rect x="61" y="77.5" width="9.5" height="9.5" rx="0" fill="#e0e0e0" />
<path d="M75.7,80.6 L78.5,83.4 L81.3,80.6" fill="none" stroke="#cfcfcf" stroke-width="1.2" stroke-linecap="round" stroke-linejoin="round"/>
<circle cx="97.5" cy="78.5" r="4.2" fill="#e0e0e0"/><circle cx="105" cy="77.5" r="4.8" fill="#e0e0e0"/><circle cx="97.5" cy="78.5" r="1.2" fill="#2c2c2c"/><circle cx="105" cy="77.5" r="1.3" fill="#2c2c2c"/>
<rect x="96" y="84" width="10" height="7" rx="1" fill="#e0e0e0" />
<path d="M106.5,87.5 L112.5,84.5 V91 Z" fill="#e0e0e0" stroke="none" stroke-width="1" />
<path d="M93.5,86 H96 V88.5 H93.5 Z" fill="#e0e0e0" stroke="none" stroke-width="1" />
<path d="M120,75 L134,81 L128,83 L126,90 Z" fill="#e0e0e0" stroke="none" stroke-width="1" />
<path d="M149.5,76 V88 M143.5,82 H155.5" fill="none" stroke="#e0e0e0" stroke-width="1.5" />
<path d="M168,78 Q164,80 163.5,77.5 Q163,74.5 166.5,74.5 Q168,74.5 169,75.5 Q172.5,73.5 176,75.5 Q177,74.5 178.5,74.5 Q182,74.5 181.5,77.5 Q181,80 177.5,79.5 Q178,83 176,85 V89 Q176,91 172.5,91 Q169,91 169,89 V85 Q167,83 168,78 Z" fill="none" stroke="#e0e0e0" stroke-width="1.3" />
<path d="M170,79.5 L171.5,80.5 M175,79.5 L173.5,80.5 M171.5,84 Q172.5,85 173.5,84" fill="none" stroke="#e0e0e0" stroke-width="1" />
<rect x="375" y="72" width="32" height="20" rx="4" fill="#232323" stroke="#313131" stroke-width="1"/>
<path d="M381,89 V75 M381,75 l-2.5,3 M381,75 l2.5,3 M381,89 H395 M395,89 l-3,-2.5 M395,89 l-3,2.5 M381,89 L391,80" fill="none" stroke="#e0e0e0" stroke-width="1.3" />
<circle cx="381" cy="89" r="1.8" fill="#e0e0e0"/>
<path d="M398.2,80.6 L401,83.4 L403.8,80.6" fill="none" stroke="#cfcfcf" stroke-width="1.2" stroke-linecap="round" stroke-linejoin="round"/>
<rect x="415.5" y="72" width="32.5" height="20" rx="4" fill="#232323" stroke="#313131" stroke-width="1"/>
<circle cx="424" cy="86" r="5" fill="none" stroke="#e0e0e0" stroke-width="1.4"/><circle cx="431" cy="79" r="5" fill="none" stroke="#e0e0e0" stroke-width="1.4"/><circle cx="428" cy="82" r="1.8" fill="#e0e0e0"/>
<path d="M439.2,80.6 L442,83.4 L444.8,80.6" fill="none" stroke="#cfcfcf" stroke-width="1.2" stroke-linecap="round" stroke-linejoin="round"/>
<rect x="479" y="72" width="36" height="20" rx="4" fill="#232323" stroke="#313131" stroke-width="1"/>
<rect x="457" y="72" width="22" height="20" rx="4" fill="#545454" />
<g transform="translate(467.5,82.5) rotate(45)"><path d="M-5,5 V-1 A5,5 0 0 1 5,-1 V5" fill="none" stroke="#a8a8a8" stroke-width="2.6"/><path d="M-5,5 V-1 A5,5 0 0 1 5,-1 V5" fill="none" stroke="#545454" stroke-width="0.9"/></g>
<rect x="484" y="76" width="5" height="5" rx="0" fill="#e0e0e0" />
<rect x="494" y="76" width="5" height="5" rx="0" fill="#e0e0e0" />
<rect x="484" y="85" width="5" height="5" rx="0" fill="#e0e0e0" />
<rect x="494" y="85" width="5" height="5" rx="0" fill="#e0e0e0" />
<path d="M505.2,80.6 L508,83.4 L510.8,80.6" fill="none" stroke="#cfcfcf" stroke-width="1.2" stroke-linecap="round" stroke-linejoin="round"/>
<rect x="522.5" y="72" width="21" height="20" rx="4" fill="#545454" />
<circle cx="533" cy="82" r="6" fill="none" stroke="#8a8a8a" stroke-width="1.6"/><circle cx="533" cy="82" r="2" fill="#e8e8e8"/>
<rect x="546.7" y="72" width="32.0" height="20" rx="4" fill="#262626" stroke="#2e2e2e" stroke-width="1"/>
<path d="M551,89 Q556,89 557,82 Q558,75 559.5,75 Q561,75 562,82 Q563,89 568,89" fill="none" stroke="#6e6e6e" stroke-width="1.3" />
<path d="M569.5,80.75 L572,83.25 L574.5,80.75" fill="none" stroke="#6a6a6a" stroke-width="1.2" stroke-linecap="round" stroke-linejoin="round"/>
<rect x="663.7" y="72" width="33.799999999999955" height="20" rx="4" fill="#232323" stroke="#313131" stroke-width="1"/>
<path d="M672,78.5 Q680,70.5 688,78.5 Q680,86.5 672,78.5 Z" fill="#e0e0e0" stroke="none" stroke-width="1" />
<circle cx="680" cy="78.5" r="2.8" fill="#232323"/><circle cx="680" cy="78.5" r="1.3" fill="#e0e0e0"/>
<path d="M664.5,81 L675,85 L670.5,86.5 L668.5,91.5 Z" fill="#e0e0e0" stroke="#232323" stroke-width="1" />
<path d="M688.2,80.6 L691,83.4 L693.8,80.6" fill="none" stroke="#cfcfcf" stroke-width="1.2" stroke-linecap="round" stroke-linejoin="round"/>
<rect x="727" y="72" width="21" height="20" rx="4" fill="#232323" stroke="#313131" stroke-width="1"/>
<rect x="705.5" y="71" width="22" height="21.5" rx="4" fill="#4772b3" />
<path d="M708,77 A13.5,13.5 0 0 1 721.5,90.5" fill="none" stroke="#e4ecfa" stroke-width="1.4" />
<path d="M711.2,87.2 L716.5,82" fill="none" stroke="#e4ecfa" stroke-width="1.4" />
<circle cx="709.8" cy="88.6" r="2" fill="none" stroke="#e4ecfa" stroke-width="1.4"/>
<path d="M719,79.5 L723.5,75 M720,75 H723.5 V78.5" fill="none" stroke="#e4ecfa" stroke-width="1.4" />
<path d="M735.2,80.6 L738,83.4 L740.8,80.6" fill="none" stroke="#cfcfcf" stroke-width="1.2" stroke-linecap="round" stroke-linejoin="round"/>
<rect x="779" y="72" width="22" height="20" rx="4" fill="#232323" stroke="#313131" stroke-width="1"/>
<rect x="757.5" y="71" width="21.5" height="21.5" rx="4" fill="#4772b3" />
<path d="M763,80.5 A5.5,5.5 0 1 0 771,88.5" fill="none" stroke="#e4ecfa" stroke-width="1.5" />
<circle cx="770.5" cy="79.5" r="5.5" fill="#eef2fa"/>
<path d="M766.5,78.5 L769.5,80.5" fill="none" stroke="#4772b3" stroke-width="1" />
<path d="M787.2,80.6 L790,83.4 L792.8,80.6" fill="none" stroke="#cfcfcf" stroke-width="1.2" stroke-linecap="round" stroke-linejoin="round"/>
<rect x="809.5" y="72" width="21" height="20" rx="4" fill="#2e2e2e" />
<rect x="813" y="75" width="13" height="14" rx="1.5" fill="none" stroke="#4e4e4e" stroke-width="1.2"/>
<path d="M815.5,78 V87 M823.5,78 V87 M815.5,82.5 H823.5" fill="none" stroke="#4a4a4a" stroke-width="1" />
<rect x="838.5" y="71" width="111.5" height="21.5" rx="4" fill="#232323" stroke="#313131" stroke-width="1"/>
<rect x="838.5" y="71" width="89" height="21.5" rx="4" fill="#505050" />
<rect x="882.5" y="71" width="22.5" height="21.5" rx="0" fill="#4772b3" />
<circle cx="848.8" cy="82.3" r="7.6" fill="#3e3e3e" stroke="#d2d2d2" stroke-width="1.3"/>
<path d="M841.5,78.2 H856 M841.5,86.6 H856 M848.8,74.7 V90" fill="none" stroke="#d2d2d2" stroke-width="1.2" />
<circle cx="871" cy="82.3" r="8" fill="#c4c4c4"/>
<circle cx="893.7" cy="82.3" r="7.8" fill="#4772b3" stroke="#eef2fa" stroke-width="1.4"/>
<path d="M893.7,82.3 V74.5 A7.8,7.8 0 0 0 886.3,84.6 Z" fill="#f4f6fb" stroke="none" stroke-width="1" />
<path d="M894.5,84 L900.5,88.5 M897.5,82 L901,85" fill="none" stroke="#eef2fa" stroke-width="1" />
<circle cx="916" cy="82.3" r="7.6" fill="#3a3a3a" stroke="#c8c8c8" stroke-width="1.3"/>
<path d="M911.5,80.5 A5,5 0 0 1 914.5,76.5" fill="none" stroke="#d0d0d0" stroke-width="1.6" />
<path d="M935.7,80.6 L938.5,83.4 L941.3,80.6" fill="none" stroke="#cfcfcf" stroke-width="1.2" stroke-linecap="round" stroke-linejoin="round"/>
<path d="M2.5,130 L5.5,133 L2.5,136" fill="none" stroke="#8a8a8a" stroke-width="1.2" stroke-linecap="round" stroke-linejoin="round"/>
<path d="M969,130 L966,133 L969,136" fill="none" stroke="#8a8a8a" stroke-width="1.2" />
<circle cx="474" cy="763.8" r="10" fill="none" stroke="#c87878" stroke-width="1" stroke-dasharray="3,4.8" opacity="0.75"/>
<path d="M474,741 V757 M474,770.5 V786 M453,763 H468 M480,764.5 H495" fill="none" stroke="#707070" stroke-width="1.2" />
<path d="M466,768.5 L482,760.5" fill="none" stroke="#606878" stroke-width="1" />
<circle cx="474" cy="763.8" r="2" fill="#d0c890"/>
<path d="M978,75 Q978,67 986,67 H2048 V341 H986 Q978,341 978,333 Z" fill="#282828"/>
<rect x="978" y="121.3" width="1070" height="23.3" rx="0" fill="#2b2b2b" />
<rect x="978" y="167.9" width="1070" height="23.3" rx="0" fill="#2b2b2b" />
<rect x="978" y="214.5" width="1070" height="23.3" rx="0" fill="#2b2b2b" />
<rect x="978" y="261.1" width="1070" height="23.3" rx="0" fill="#2b2b2b" />
<rect x="978" y="307.70000000000005" width="1070" height="23.3" rx="0" fill="#2b2b2b" />
<rect x="978" y="214" width="1070" height="24" rx="0" fill="#375190" />
<rect x="978" y="214" width="1070" height="1" rx="0" fill="#4060a0" />
<path d="M2048,340.5 H986 Q978.5,340.5 978.5,333 V75 Q978.5,67.5 986,67.5 H2048" fill="none" stroke="#353535" stroke-width="1"/>
<rect x="988" y="72" width="34" height="21" rx="4" fill="#232323" stroke="#313131" stroke-width="1"/>
<rect x="992" y="75" width="6" height="4" rx="0" fill="#e0e0e0" />
<path d="M995,79 V91 M995,84 H1000 M995,90 H1000" fill="none" stroke="#aaa" stroke-width="1" />
<rect x="1000" y="82" width="8" height="4" rx="0" fill="#e0e0e0" />
<rect x="1000" y="88" width="8" height="4" rx="0" fill="#e0e0e0" />
<path d="M1012.2,81.6 L1015,84.4 L1017.8,81.6" fill="none" stroke="#cfcfcf" stroke-width="1.2" stroke-linecap="round" stroke-linejoin="round"/>
<rect x="1030" y="72" width="33" height="21" rx="4" fill="#232323" stroke="#313131" stroke-width="1"/>
<rect x="1040" y="74" width="11" height="11" rx="0" fill="none" stroke="#e0e0e0" stroke-width="1.3"/>
<path d="M1041,84 L1045,78 L1049,84 Z" fill="#e0e0e0" stroke="none" stroke-width="1" />
<path d="M1037,77 V88 H1048 M1035,79 V90 H1046" fill="none" stroke="#9a9a9a" stroke-width="1" />
<path d="M1053.2,81.6 L1056,84.4 L1058.8,81.6" fill="none" stroke="#cfcfcf" stroke-width="1.2" stroke-linecap="round" stroke-linejoin="round"/>
<rect x="1433" y="72" width="137" height="21" rx="4" fill="#1c1c1c" stroke="#2e2e2e" stroke-width="1"/>
<circle cx="1450" cy="80" r="4.5" fill="none" stroke="#d0d0d0" stroke-width="1.5"/>
<path d="M1447,83.5 L1440,90" fill="none" stroke="#d0d0d0" stroke-width="1.6" />
<text x="1463" y="87" font-size="13" fill="#777" text-anchor="start" >検索</text>
<rect x="1976" y="72" width="35" height="22" rx="4" fill="#232323" stroke="#313131" stroke-width="1"/>
<path d="M1978.5,75.5 H1994.5 L1988,83.5 V87 L1985,90.5 V83.5 Z" fill="none" stroke="#e0e0e0" stroke-width="1.3" />
<path d="M2001,82.5 L2004,85.5 L2007,82.5" fill="none" stroke="#cfcfcf" stroke-width="1.2" stroke-linecap="round" stroke-linejoin="round"/>
<rect x="2018" y="72" width="22" height="22" rx="4" fill="#4a4a4a" />
<path d="M2027,77.5 H2021.8 V91 H2033 V84" fill="none" stroke="#c8c8c8" stroke-width="1.2" />
<path d="M2021.8,81 H2027" fill="none" stroke="#c8c8c8" stroke-width="1.2" />
<rect x="2025" y="85" width="4" height="1.5" rx="0" fill="#c8c8c8" />
<circle cx="2032.6" cy="78.8" r="4" fill="#e8e8e8"/>
<path d="M2032.6,76.6 V81 M2030.4,78.8 H2034.8" fill="none" stroke="#4a4a4a" stroke-width="1.2" />
<rect x="1002" y="100" width="23" height="20" rx="4" fill="#4a4a4a" />
<rect x="1005" y="102" width="17" height="4" rx="0.5" fill="#e0e0e0" />
<rect x="1006" y="107.5" width="15" height="10" rx="0.5" fill="#e0e0e0" />
<rect x="1011" y="110" width="5" height="1.8" rx="0.9" fill="#4a4a4a" />
<text x="1029" y="116" font-size="13.6" fill="#e0e0e0" text-anchor="start" >シーンコレクション</text>
<path d="M1011.0,130 L1015.0,134 L1011.0,138" fill="none" stroke="#cfcfcf" stroke-width="1.3" stroke-linecap="round" stroke-linejoin="round"/>
<rect x="1028" y="125" width="17" height="4" rx="0.5" fill="#e0e0e0" />
<rect x="1029" y="130.5" width="15" height="10" rx="0.5" fill="#e0e0e0" />
<rect x="1034" y="133" width="5" height="1.8" rx="0.9" fill="#282828" />
<text x="1052" y="139" font-size="14" fill="#e0e0e0" text-anchor="start" >01_Camera</text>
<path d="M1011.0,153 L1015.0,157 L1011.0,161" fill="none" stroke="#cfcfcf" stroke-width="1.3" stroke-linecap="round" stroke-linejoin="round"/>
<rect x="1028" y="148" width="17" height="4" rx="0.5" fill="#e0e0e0" />
<rect x="1029" y="153.5" width="15" height="10" rx="0.5" fill="#e0e0e0" />
<rect x="1034" y="156" width="5" height="1.8" rx="0.9" fill="#282828" />
<text x="1052" y="162" font-size="14" fill="#e0e0e0" text-anchor="start" >02_Light</text>
<rect x="1028" y="172" width="17" height="4" rx="0.5" fill="#8a8a8a" />
<rect x="1029" y="177.5" width="15" height="10" rx="0.5" fill="#8a8a8a" />
<rect x="1034" y="180" width="5" height="1.8" rx="0.9" fill="#282828" />
<text x="1052" y="186" font-size="14" fill="#8a8a8a" text-anchor="start" >Mesh</text>
<path d="M1008.5,200.75 L1013,205.25 L1017.5,200.75" fill="none" stroke="#cfcfcf" stroke-width="1.3" stroke-linecap="round" stroke-linejoin="round"/>
<rect x="1028" y="195" width="17" height="4" rx="0.5" fill="#e0e0e0" />
<rect x="1029" y="200.5" width="15" height="10" rx="0.5" fill="#e0e0e0" />
<rect x="1034" y="203" width="5" height="1.8" rx="0.9" fill="#282828" />
<text x="1052" y="209" font-size="14" fill="#e0e0e0" text-anchor="start" >Line</text>
<circle cx="1153" cy="129" r="3.2" fill="#e09448"/><circle cx="1161" cy="128" r="4" fill="#e09448"/>
<rect x="1150" y="133" width="11" height="8" rx="1" fill="#e09448" />
<path d="M1161,136 L1167,133 V141 L1161,138 Z" fill="#e09448" stroke="none" stroke-width="1" />
<circle cx="1153" cy="129" r="1.2" fill="#282828"/><circle cx="1161" cy="128" r="1.5" fill="#282828"/>
<circle cx="1141" cy="153" r="7" fill="#e09448"/>
<rect x="1137" y="158" width="8" height="4" rx="0" fill="#e09448" />
<path d="M1138,164 H1144" fill="none" stroke="#e09448" stroke-width="1.5" />
<path d="M1138,151 L1141,156 L1144,151" fill="none" stroke="#2b2b2b" stroke-width="1.2" />
<path d="M1011.5,215 V238" fill="none" stroke="#2a3f6a" stroke-width="1.5" />
<path d="M1034.0,222 L1038.0,226 L1034.0,230" fill="none" stroke="#cfcfcf" stroke-width="1.3" stroke-linecap="round" stroke-linejoin="round"/>
<rect x="1048" y="216" width="23" height="20" rx="4" fill="#5a6f9a" />
<path d="M1052,219 H1067 L1059.5,233 Z" fill="#e8934a" stroke="none" stroke-width="1" />
<path d="M1055.5,222 H1063.5 L1059.5,229 Z" fill="#5a6f9a" stroke="none" stroke-width="1" />
<text x="1075" y="232" font-size="14" fill="#e9b060" text-anchor="start" >Cube</text>
<path d="M1137.8,232.5 L1144.5,225.8" fill="none" stroke="#6f9ae6" stroke-width="3.6" stroke-linecap="round"/>
<path d="M1143.6,220.2 A4.6,4.6 0 1 0 1150.3,226.9" fill="none" stroke="#6f9ae6" stroke-width="3.2" stroke-linecap="round"/>
<path d="M1137.8,232.5 L1144.5,225.8" fill="none" stroke="#375190" stroke-width="1.2" stroke-linecap="round"/>
<path d="M1143.9,221 A3.6,3.6 0 1 0 1149.5,226.6" fill="none" stroke="#375190" stroke-width="1.1" />
<path d="M1160,220 H1173 L1166.5,232 Z" fill="none" stroke="#2bb8b8" stroke-width="1.4" />
<circle cx="1160" cy="220" r="1.9" fill="#375190" stroke="#2bb8b8" stroke-width="1.3"/>
<circle cx="1173" cy="220" r="1.9" fill="#375190" stroke="#2bb8b8" stroke-width="1.3"/>
<circle cx="1166.5" cy="232" r="1.9" fill="#375190" stroke="#2bb8b8" stroke-width="1.3"/>
<rect x="1928" y="127.0" width="12.5" height="12.5" rx="1.5" fill="#e3e3e3" />
<path d="M1930.5,133.5 L1933.5,136.5 L1938.5,130.5" fill="none" stroke="#222" stroke-width="1.6" />
<path d="M1951,126.5 L1965,132.0 L1958.5,134.0 L1956,140.5 Z" fill="#e3e3e3" stroke="none" stroke-width="1" />
<path d="M1973,133.5 Q1981,125.5 1989,133.5 Q1981,141.5 1973,133.5 Z" fill="#e3e3e3" stroke="none" stroke-width="1" />
<circle cx="1981" cy="133.5" r="3" fill="#2b2b2b"/><circle cx="1981" cy="133.5" r="1.3" fill="#e3e3e3"/>
<rect x="1996.5" y="127.0" width="15" height="10" rx="1" fill="none" stroke="#e3e3e3" stroke-width="1.4"/>
<rect x="1998.5" y="129.0" width="11" height="6" rx="0" fill="#e3e3e3" />
<path d="M2004,137.5 V140.0 M2000,140.5 H2008" fill="none" stroke="#e3e3e3" stroke-width="1.4" />
<rect x="2019" y="128.5" width="17" height="11.5" rx="1.5" fill="#e3e3e3" />
<rect x="2023" y="126.0" width="9" height="3" rx="1" fill="#e3e3e3" />
<circle cx="2027.5" cy="134.0" r="3.8" fill="#2b2b2b"/><circle cx="2027.5" cy="134.0" r="2.2" fill="#e3e3e3"/>
<rect x="1928" y="150.0" width="12.5" height="12.5" rx="1.5" fill="#e3e3e3" />
<path d="M1930.5,156.5 L1933.5,159.5 L1938.5,153.5" fill="none" stroke="#222" stroke-width="1.6" />
<path d="M1951,149.5 L1965,155.0 L1958.5,157.0 L1956,163.5 Z" fill="#e3e3e3" stroke="none" stroke-width="1" />
<path d="M1973,156.5 Q1981,148.5 1989,156.5 Q1981,164.5 1973,156.5 Z" fill="#e3e3e3" stroke="none" stroke-width="1" />
<circle cx="1981" cy="156.5" r="3" fill="#282828"/><circle cx="1981" cy="156.5" r="1.3" fill="#e3e3e3"/>
<rect x="1996.5" y="150.0" width="15" height="10" rx="1" fill="none" stroke="#e3e3e3" stroke-width="1.4"/>
<rect x="1998.5" y="152.0" width="11" height="6" rx="0" fill="#e3e3e3" />
<path d="M2004,160.5 V163.0 M2000,163.5 H2008" fill="none" stroke="#e3e3e3" stroke-width="1.4" />
<rect x="2019" y="151.5" width="17" height="11.5" rx="1.5" fill="#e3e3e3" />
<rect x="2023" y="149.0" width="9" height="3" rx="1" fill="#e3e3e3" />
<circle cx="2027.5" cy="157.0" r="3.8" fill="#282828"/><circle cx="2027.5" cy="157.0" r="2.2" fill="#e3e3e3"/>
<rect x="1928.5" y="174" width="11.5" height="11.5" rx="1.5" fill="none" stroke="#7a7a7a" stroke-width="1.2"/>
<path d="M1951,173 L1965,178.5 L1958.5,180.5 L1956,187 Z" fill="#5c5c5c" stroke="none" stroke-width="1" />
<path d="M1973,180 Q1981,172 1989,180 Q1981,188 1973,180 Z" fill="#5c5c5c" stroke="none" stroke-width="1" />
<circle cx="1981" cy="180" r="3" fill="#2b2b2b"/><circle cx="1981" cy="180" r="1.3" fill="#5c5c5c"/>
<rect x="1996.5" y="173.5" width="15" height="10" rx="1" fill="none" stroke="#5c5c5c" stroke-width="1.4"/>
<rect x="1998.5" y="175.5" width="11" height="6" rx="0" fill="#5c5c5c" />
<path d="M2004,184 V186.5 M2000,187 H2008" fill="none" stroke="#5c5c5c" stroke-width="1.4" />
<rect x="2019" y="175" width="17" height="11.5" rx="1.5" fill="#5c5c5c" />
<rect x="2023" y="172.5" width="9" height="3" rx="1" fill="#5c5c5c" />
<circle cx="2027.5" cy="180.5" r="3.8" fill="#2b2b2b"/><circle cx="2027.5" cy="180.5" r="2.2" fill="#5c5c5c"/>
<rect x="1928" y="196.5" width="12.5" height="12.5" rx="1.5" fill="#e3e3e3" />
<path d="M1930.5,203 L1933.5,206 L1938.5,200" fill="none" stroke="#222" stroke-width="1.6" />
<path d="M1951,196 L1965,201.5 L1958.5,203.5 L1956,210 Z" fill="#e3e3e3" stroke="none" stroke-width="1" />
<path d="M1973,203 Q1981,195 1989,203 Q1981,211 1973,203 Z" fill="#e3e3e3" stroke="none" stroke-width="1" />
<circle cx="1981" cy="203" r="3" fill="#282828"/><circle cx="1981" cy="203" r="1.3" fill="#e3e3e3"/>
<rect x="1996.5" y="196.5" width="15" height="10" rx="1" fill="none" stroke="#e3e3e3" stroke-width="1.4"/>
<rect x="1998.5" y="198.5" width="11" height="6" rx="0" fill="#e3e3e3" />
<path d="M2004,207 V209.5 M2000,210 H2008" fill="none" stroke="#e3e3e3" stroke-width="1.4" />
<rect x="2019" y="198" width="17" height="11.5" rx="1.5" fill="#e3e3e3" />
<rect x="2023" y="195.5" width="9" height="3" rx="1" fill="#e3e3e3" />
<circle cx="2027.5" cy="203.5" r="3.8" fill="#282828"/><circle cx="2027.5" cy="203.5" r="2.2" fill="#e3e3e3"/>
<path d="M1951,219 L1965,224.5 L1958.5,226.5 L1956,233 Z" fill="#e3e3e3" stroke="none" stroke-width="1" />
<path d="M1973,226 Q1981,218 1989,226 Q1981,234 1973,226 Z" fill="#e3e3e3" stroke="none" stroke-width="1" />
<circle cx="1981" cy="226" r="3" fill="#375190"/><circle cx="1981" cy="226" r="1.3" fill="#e3e3e3"/>
<rect x="1996.5" y="219.5" width="15" height="10" rx="1" fill="none" stroke="#e3e3e3" stroke-width="1.4"/>
<rect x="1998.5" y="221.5" width="11" height="6" rx="0" fill="#e3e3e3" />
<path d="M2004,230 V232.5 M2000,233 H2008" fill="none" stroke="#e3e3e3" stroke-width="1.4" />
<rect x="2019" y="221" width="17" height="11.5" rx="1.5" fill="#e3e3e3" />
<rect x="2023" y="218.5" width="9" height="3" rx="1" fill="#e3e3e3" />
<circle cx="2027.5" cy="226.5" r="3.8" fill="#375190"/><circle cx="2027.5" cy="226.5" r="2.2" fill="#e3e3e3"/>
<defs><clipPath id="prclip"><path d="M978,354 Q978,346 986,346 H2048 V773 H986 Q978,773 978,765 Z"/></clipPath></defs>
<g clip-path="url(#prclip)">
<rect x="978" y="346" width="1070" height="427" rx="0" fill="#2e2e2e" />
<rect x="978" y="346" width="1070" height="30" rx="0" fill="#2b2b2b" />
<rect x="978" y="376" width="34" height="397" rx="0" fill="#1f1f1f" />
<rect x="987" y="351" width="35.5" height="20.5" rx="4" fill="#242424" stroke="#333" stroke-width="1"/>
<rect x="993" y="354" width="16" height="6.5" rx="3.2" fill="#e0e0e0" />
<rect x="1000" y="355.5" width="7" height="3.5" rx="1.7" fill="#242424" />
<rect x="993" y="362.5" width="16" height="6.5" rx="3.2" fill="#e0e0e0" />
<rect x="1002" y="364" width="5.5" height="3.5" rx="1.7" fill="#242424" />
<path d="M1013.2,360.1 L1016,362.9 L1018.8,360.1" fill="none" stroke="#cfcfcf" stroke-width="1.2" stroke-linecap="round" stroke-linejoin="round"/>
<rect x="1447" y="350" width="138" height="21" rx="4" fill="#1c1c1c" stroke="#2e2e2e" stroke-width="1"/>
<circle cx="1465" cy="358" r="4.5" fill="none" stroke="#d0d0d0" stroke-width="1.5"/>
<path d="M1462,361.5 L1455,368" fill="none" stroke="#d0d0d0" stroke-width="1.6" />
<text x="1478" y="365" font-size="13" fill="#777" text-anchor="start" >検索</text>
<rect x="2017" y="351" width="23" height="20" rx="4" fill="#242424" stroke="#333" stroke-width="1"/>
<path d="M2025.5,359.5 L2028.5,362.5 L2031.5,359.5" fill="none" stroke="#cfcfcf" stroke-width="1.2" stroke-linecap="round" stroke-linejoin="round"/>
<path d="M991.5,393.5 V402" fill="none" stroke="#c4c4c4" stroke-width="1.3" />
<circle cx="991.5" cy="405.5" r="3.3" fill="#c4c4c4"/>
<path d="M1001.5,399 V409" fill="none" stroke="#c4c4c4" stroke-width="2.4" stroke-linecap="round"/>
<path d="M998,393 V396 Q1001.5,400.5 1005,396 V393" fill="none" stroke="#c4c4c4" stroke-width="1.8" />
<rect x="989" y="438" width="17.5" height="12.5" rx="1.5" fill="#c4c4c4" />
<rect x="993" y="435" width="7" height="3.5" rx="1" fill="#c4c4c4" />
<rect x="991.5" y="440.5" width="10" height="8" rx="0" fill="#1f1f1f" />
<path d="M991.5,443 H1001.5 M991.5,446 H1001.5" fill="none" stroke="#6a6a6a" stroke-width="1" />
<circle cx="1004" cy="441.5" r="0.9" fill="#1f1f1f"/><circle cx="1004" cy="446.5" r="0.9" fill="#1f1f1f"/>
<rect x="989" y="466.5" width="17" height="6.5" rx="1.5" fill="#c4c4c4" />
<rect x="992.5" y="472" width="10" height="11" rx="0" fill="#c4c4c4" />
<rect x="994" y="473" width="7" height="6" rx="0" fill="#6a6a6a" />
<path d="M994.5,478.5 L997,475.5 L999.5,478.5 Z" fill="#1f1f1f" stroke="none" stroke-width="1" />
<rect x="993" y="499" width="13" height="11.5" rx="1" fill="#c4c4c4" />
<rect x="994.5" y="500.5" width="10" height="8.5" rx="0" fill="#1f1f1f" />
<path d="M995,509 L999,502.5 L1003,509 Z" fill="#c4c4c4" stroke="none" stroke-width="1" />
<circle cx="1003" cy="502.5" r="1" fill="#c4c4c4"/>
<path d="M991,502 V513 H1002 M989,504 V515.5 H1000" fill="none" stroke="#8a8a8a" stroke-width="1" />
<path d="M990.5,543 L995.5,531.5 L999,540 Z" fill="#c4c4c4" stroke="none" stroke-width="1" />
<circle cx="1003" cy="533" r="2.5" fill="#c4c4c4"/><circle cx="1000" cy="541.5" r="4.8" fill="#1f1f1f" stroke="#c4c4c4" stroke-width="1.5"/><circle cx="1000" cy="541.5" r="1.8" fill="none" stroke="#c4c4c4" stroke-width="1"/>
<circle cx="997" cy="571" r="7" fill="none" stroke="#c86070" stroke-width="1.6"/>
<path d="M992.5,566 Q996,566 995.5,569.5 Q994,572 996,574 Q997,576 995,577.5 M999,565 Q1001,567.5 1003.5,567 M999.5,573 Q1002,572 1003,575" fill="none" stroke="#c86070" stroke-width="1.8" />
<path d="M989,578.5 L1005.5,563" fill="none" stroke="#c86070" stroke-width="1.2" />
<path d="M989,608 V605 H992 M1002,605 H1005 V608 M989,618 V621 H992 M1002,621 H1005 V618" fill="none" stroke="#a08060" stroke-width="1.2" />
<rect x="991.5" y="607.5" width="11" height="11" rx="0" fill="#e89a4e" />
<path d="M991,652 L1000,642" fill="none" stroke="#6f9ae6" stroke-width="3" stroke-linecap="round"/>
<path d="M998,640 a4.5,4.5 0 1 0 6,5" fill="none" stroke="#6f9ae6" stroke-width="2.5" stroke-linecap="round"/>
<path d="M991,671 L1003,671 M991,671 L991,683 M991,671 L1002,682" fill="none" stroke="#6f9ae6" stroke-width="1.4" />
<circle cx="991" cy="671" r="2.3" fill="#6f9ae6"/>
<circle cx="1003" cy="671" r="2.3" fill="#6f9ae6"/>
<circle cx="991" cy="683" r="2.3" fill="#6f9ae6"/>
<circle cx="1002" cy="682" r="2.3" fill="#6f9ae6"/>
<circle cx="996" cy="709" r="6.5" fill="none" stroke="#6f9ae6" stroke-width="1.6"/><circle cx="996" cy="709" r="3.5" fill="#6f9ae6"/><circle cx="1003" cy="702" r="2.2" fill="#6f9ae6"/>
<path d="M990,745 a6,6 0 1 0 11,-6 l3,-4 l-6,2 a6,6 0 0 0 -8,8 Z" fill="none" stroke="#6f9ae6" stroke-width="1.6" />
<circle cx="995" cy="743" r="2.8" fill="#6f9ae6"/>
<path d="M991,766 H1003" fill="none" stroke="#3cbf8a" stroke-width="1.2" />
<circle cx="990" cy="766" r="3" fill="none" stroke="#3cbf8a" stroke-width="1.6"/><circle cx="1004" cy="766" r="3" fill="none" stroke="#3cbf8a" stroke-width="1.6"/>
<path d="M990,769 V774 M1004,769 V774" fill="none" stroke="#3cbf8a" stroke-width="1.6" />
<path d="M1026,392 V389 H1029 M1040,389 H1043 V392 M1026,403 V406 H1029 M1040,406 H1043 V403" fill="none" stroke="#a8a8a8" stroke-width="1.2" />
<rect x="1029.5" y="392" width="10" height="10.5" rx="0" fill="#e0e0e0" />
<text x="1054" y="402" font-size="14" fill="#d9d9d9" text-anchor="start" >Cube</text>
<path d="M1107.0,393 L1111.0,397 L1107.0,401" fill="none" stroke="#cfcfcf" stroke-width="1.3" stroke-linecap="round" stroke-linejoin="round"/>
<path d="M1125,391 H1139 L1132,404 Z" fill="none" stroke="#e0e0e0" stroke-width="1.4" />
<circle cx="1125" cy="391" r="1.8" fill="#2e2e2e" stroke="#e0e0e0" stroke-width="1.2"/>
<circle cx="1139" cy="391" r="1.8" fill="#2e2e2e" stroke="#e0e0e0" stroke-width="1.2"/>
<circle cx="1132" cy="404" r="1.8" fill="#2e2e2e" stroke="#e0e0e0" stroke-width="1.2"/>
<text x="1151" y="402" font-size="14" fill="#d9d9d9" text-anchor="start" >Cube</text>
<path d="M1205.0,393 L1209.0,397 L1205.0,401" fill="none" stroke="#cfcfcf" stroke-width="1.3" stroke-linecap="round" stroke-linejoin="round"/>
<circle cx="1229" cy="397" r="7.5" fill="#e0e0e0"/>
<path d="M1229,397 V389.5 A7.5,7.5 0 0 1 1236.5,397 Z" fill="#2e2e2e" stroke="none" stroke-width="1" />
<path d="M1229,397 H1221.5 A7.5,7.5 0 0 0 1229,404.5 Z" fill="#2e2e2e" stroke="none" stroke-width="1" />
<circle cx="1229" cy="397" r="7.5" fill="none" stroke="#e0e0e0" stroke-width="1.4"/>
<text x="1249" y="402" font-size="14" fill="#d9d9d9" text-anchor="start" >white</text>
<g transform="translate(2029,397) rotate(45)" fill="none" stroke="#aaa" stroke-width="1.3"><path d="M-4.5,-8 H4.5 M-2.5,-8 V-1 M2.5,-8 V-1 M-5,-1 H5 M0,-1 V8"/></g>
<rect x="1023" y="429" width="984" height="135" rx="5" fill="#242424" />
<rect x="1028" y="434.5" width="973" height="21" rx="4" fill="#4a4b52" />
<circle cx="1047.5" cy="445" r="8" fill="#fafafa"/><circle cx="1047.5" cy="468" r="8" fill="#050505"/>
<text x="1065" y="450" font-size="14" fill="#f0f0f0" text-anchor="start" >white</text>
<text x="1064" y="473" font-size="14" fill="#d9d9d9" text-anchor="start" >Line</text>
<path d="M1036,550 L1043,554.5 L1036,559 Z" fill="#aaa" stroke="none" stroke-width="1" />
<rect x="1520.0" y="551.0" width="1.5" height="1.5" rx="0" fill="#888" />
<rect x="1520.0" y="554.5" width="1.5" height="1.5" rx="0" fill="#888" />
<rect x="1523.5" y="551.0" width="1.5" height="1.5" rx="0" fill="#888" />
<rect x="1523.5" y="554.5" width="1.5" height="1.5" rx="0" fill="#888" />
<rect x="1527.0" y="551.0" width="1.5" height="1.5" rx="0" fill="#888" />
<rect x="1527.0" y="554.5" width="1.5" height="1.5" rx="0" fill="#888" />
<rect x="1530.5" y="551.0" width="1.5" height="1.5" rx="0" fill="#888" />
<rect x="1530.5" y="554.5" width="1.5" height="1.5" rx="0" fill="#888" />
<rect x="2018" y="429" width="22" height="45" rx="4" fill="#4a4a4a" />
<path d="M2018,451.5 H2040" fill="none" stroke="#3a3a3a" stroke-width="1" />
<path d="M2029,434 V446 M2023,440 H2035" fill="none" stroke="#e0e0e0" stroke-width="1.4" />
<path d="M2023,462.5 H2035" fill="none" stroke="#e0e0e0" stroke-width="1.4" />
<rect x="2018" y="482" width="22" height="22" rx="4" fill="#262626" stroke="#333" stroke-width="1"/>
<path d="M2025,490.0 L2029,494.0 L2033,490.0" fill="none" stroke="#cfcfcf" stroke-width="1.4" stroke-linecap="round" stroke-linejoin="round"/>
<rect x="2018" y="513" width="22" height="45" rx="4" fill="#4a4a4a" />
<path d="M2018,535.5 H2040" fill="none" stroke="#3a3a3a" stroke-width="1" />
<path d="M2024,528 L2029,521 L2034,528 Z" fill="#e0e0e0" stroke="none" stroke-width="1" />
<path d="M2024,542 L2029,549 L2034,542 Z" fill="#e0e0e0" stroke="none" stroke-width="1" />
<rect x="1023" y="573" width="35" height="21" rx="4" fill="#262626" />
<circle cx="1036" cy="583.5" r="7.5" fill="#e0e0e0"/>
<path d="M1036,583.5 V576.0 A7.5,7.5 0 0 1 1043.5,583.5 Z" fill="#262626" stroke="none" stroke-width="1" />
<path d="M1036,583.5 H1028.5 A7.5,7.5 0 0 0 1036,591.0 Z" fill="#262626" stroke="none" stroke-width="1" />
<circle cx="1036" cy="583.5" r="7.5" fill="none" stroke="#e0e0e0" stroke-width="1.4"/>
<path d="M1047.2,582.6 L1050,585.4 L1052.8,582.6" fill="none" stroke="#cfcfcf" stroke-width="1.2" stroke-linecap="round" stroke-linejoin="round"/>
<rect x="1058" y="573" width="670" height="21" rx="0" fill="#1c1c1c" />
<text x="1068" y="588" font-size="14" fill="#d9d9d9" text-anchor="start" >white</text>
<rect x="1727.5" y="573" width="197" height="21" rx="0" fill="#545454" />
<text x="1826" y="588" font-size="14" fill="#e8e8e8" text-anchor="middle" >2</text>
<rect x="1924" y="573" width="69.5" height="21" rx="4" fill="#4a4a4a" />
<rect x="1924" y="573" width="10" height="21" rx="0" fill="#4a4a4a" />
<path d="M1930,578 Q1936,576 1941,578 V584 Q1941,589 1936,591 Q1931,589 1930,584 Z" fill="none" stroke="#bbb" stroke-width="1.2" />
<path d="M1952,580 H1960 V591 H1952 Z M1955,580 V577 H1963 L1966,580 V588 H1960" fill="none" stroke="#bbb" stroke-width="1.2" />
<path d="M1977,578 L1988,589 M1988,578 L1977,589" fill="none" stroke="#e0e0e0" stroke-width="1.4" />
<rect x="2005" y="573" width="35" height="21" rx="4" fill="#262626" stroke="#333" stroke-width="1"/>
<path d="M2013,578 H2027 L2020,590 Z" fill="none" stroke="#e0e0e0" stroke-width="1.4" />
<circle cx="2013" cy="578" r="1.8" fill="#262626" stroke="#e0e0e0" stroke-width="1.2"/>
<circle cx="2027" cy="578" r="1.8" fill="#262626" stroke="#e0e0e0" stroke-width="1.2"/>
<circle cx="2020" cy="590" r="1.8" fill="#262626" stroke="#e0e0e0" stroke-width="1.2"/>
<path d="M2030.5,582.75 L2033,585.25 L2035.5,582.75" fill="none" stroke="#cfcfcf" stroke-width="1.2" stroke-linecap="round" stroke-linejoin="round"/>
<path d="M1035.0,616.5 L1039.0,620.5 L1035.0,624.5" fill="none" stroke="#cfcfcf" stroke-width="1.3" stroke-linecap="round" stroke-linejoin="round"/>
<text x="1047" y="626" font-size="13.1" fill="#d9d9d9" text-anchor="start" >プレビュー</text>
<path d="M1032.5,648.75 L1037,653.25 L1041.5,648.75" fill="none" stroke="#cfcfcf" stroke-width="1.3" stroke-linecap="round" stroke-linejoin="round"/>
<text x="1047" y="657" font-size="13.1" fill="#d9d9d9" text-anchor="start" >サーフェス</text>
<rect x="1022" y="665.5" width="1018" height="55" rx="5" fill="#2a2a2a" />
<text x="1416" y="692" font-size="13.1" fill="#d9d9d9" text-anchor="end" >サーフェス</text>
<rect x="1427.5" y="675.5" width="578" height="22.5" rx="4" fill="#262626" stroke="#333" stroke-width="1"/>
<circle cx="1439.5" cy="686.5" r="4.2" fill="#5cc85c"/>
<text x="1452" y="692" font-size="14" fill="#d9d9d9" text-anchor="start" >RGB</text>
<path d="M1035.0,732.5 L1039.0,736.5 L1035.0,740.5" fill="none" stroke="#cfcfcf" stroke-width="1.3" stroke-linecap="round" stroke-linejoin="round"/>
<text x="1047" y="742" font-size="13.1" fill="#d9d9d9" text-anchor="start" >ボリューム</text>
<path d="M1035.0,762.5 L1039.0,766.5 L1035.0,770.5" fill="none" stroke="#cfcfcf" stroke-width="1.3" stroke-linecap="round" stroke-linejoin="round"/>
<text x="1047" y="772" font-size="13.1" fill="#d9d9d9" text-anchor="start" >ディスプレイスメント</text>
<rect x="2016.0" y="617.5" width="1.4" height="1.4" rx="0" fill="#777" />
<rect x="2016.0" y="621.0" width="1.4" height="1.4" rx="0" fill="#777" />
<rect x="2019.5" y="617.5" width="1.4" height="1.4" rx="0" fill="#777" />
<rect x="2019.5" y="621.0" width="1.4" height="1.4" rx="0" fill="#777" />
<rect x="2023.0" y="617.5" width="1.4" height="1.4" rx="0" fill="#777" />
<rect x="2023.0" y="621.0" width="1.4" height="1.4" rx="0" fill="#777" />
<rect x="2026.5" y="617.5" width="1.4" height="1.4" rx="0" fill="#777" />
<rect x="2026.5" y="621.0" width="1.4" height="1.4" rx="0" fill="#777" />
<rect x="2016.0" y="648.0" width="1.4" height="1.4" rx="0" fill="#777" />
<rect x="2016.0" y="651.5" width="1.4" height="1.4" rx="0" fill="#777" />
<rect x="2019.5" y="648.0" width="1.4" height="1.4" rx="0" fill="#777" />
<rect x="2019.5" y="651.5" width="1.4" height="1.4" rx="0" fill="#777" />
<rect x="2023.0" y="648.0" width="1.4" height="1.4" rx="0" fill="#777" />
<rect x="2023.0" y="651.5" width="1.4" height="1.4" rx="0" fill="#777" />
<rect x="2026.5" y="648.0" width="1.4" height="1.4" rx="0" fill="#777" />
<rect x="2026.5" y="651.5" width="1.4" height="1.4" rx="0" fill="#777" />
<rect x="2016.0" y="734.0" width="1.4" height="1.4" rx="0" fill="#777" />
<rect x="2016.0" y="737.5" width="1.4" height="1.4" rx="0" fill="#777" />
<rect x="2019.5" y="734.0" width="1.4" height="1.4" rx="0" fill="#777" />
<rect x="2019.5" y="737.5" width="1.4" height="1.4" rx="0" fill="#777" />
<rect x="2023.0" y="734.0" width="1.4" height="1.4" rx="0" fill="#777" />
<rect x="2023.0" y="737.5" width="1.4" height="1.4" rx="0" fill="#777" />
<rect x="2026.5" y="734.0" width="1.4" height="1.4" rx="0" fill="#777" />
<rect x="2026.5" y="737.5" width="1.4" height="1.4" rx="0" fill="#777" />
<rect x="2016.0" y="764.0" width="1.4" height="1.4" rx="0" fill="#777" />
<rect x="2016.0" y="767.5" width="1.4" height="1.4" rx="0" fill="#777" />
<rect x="2019.5" y="764.0" width="1.4" height="1.4" rx="0" fill="#777" />
<rect x="2019.5" y="767.5" width="1.4" height="1.4" rx="0" fill="#777" />
<rect x="2023.0" y="764.0" width="1.4" height="1.4" rx="0" fill="#777" />
<rect x="2023.0" y="767.5" width="1.4" height="1.4" rx="0" fill="#777" />
<rect x="2026.5" y="764.0" width="1.4" height="1.4" rx="0" fill="#777" />
<rect x="2026.5" y="767.5" width="1.4" height="1.4" rx="0" fill="#777" />
<rect x="2041" y="378" width="3" height="140" rx="1.5" fill="#3a3a3a" />
</g>
<path d="M2048,772.5 H986 Q978.5,772.5 978.5,765 V354 Q978.5,346.5 986,346.5 H2048" fill="none" stroke="#383838" stroke-width="1"/>
<path d="M978,785 Q978,777 986,777 H2048 V1274 H986 Q978,1274 978,1266 Z" fill="#1d1d1d"/>
<path d="M2048,1273.5 H986 Q978.5,1273.5 978.5,1266 V785 Q978.5,777.5 986,777.5 H2048" fill="none" stroke="#2c2c2c" stroke-width="1"/>
<path d="M987,1284 V1280 Q987,1276 991,1276 H2048 V1284 Z" fill="#303030"/>
<rect x="986.5" y="781" width="36.0" height="22" rx="4" fill="#232323" stroke="#333" stroke-width="1"/>
<circle cx="994" cy="786.5" r="2.2" fill="#c8c8c8"/><circle cx="999.5" cy="787.5" r="2.3" fill="#c8c8c8"/><circle cx="996.5" cy="793" r="2.8" fill="#d8d8d8"/><circle cx="1004" cy="796" r="4.3" fill="#f0f0f0"/>
<path d="M1012.2,790.6 L1015,793.4 L1017.8,790.6" fill="none" stroke="#cfcfcf" stroke-width="1.2" stroke-linecap="round" stroke-linejoin="round"/>
<path d="M1032,792 Q1040.5,783 1049,792 Q1040.5,801 1032,792 Z" fill="#e0e0e0" stroke="none" stroke-width="1" />
<circle cx="1040.5" cy="792" r="3" fill="#1d1d1d"/><circle cx="1040.5" cy="792" r="1.4" fill="#e0e0e0"/>
<path d="M1062,785 L1076,791 L1070,793 L1068,800 Z" fill="#e0e0e0" stroke="none" stroke-width="1" />
<path d="M1098,786 V798 M1092,792 H1104" fill="none" stroke="#e0e0e0" stroke-width="1.5" />
<rect x="1119" y="785" width="12" height="14" rx="2" fill="none" stroke="#e0e0e0" stroke-width="1.5"/>
<rect x="1119" y="785" width="12" height="3" rx="1" fill="#e0e0e0" />
<circle cx="1132" cy="793" r="3" fill="#9a9a9a"/>
<rect x="1381.5" y="781.5" width="143.5" height="21.5" rx="4" fill="#232323" stroke="#333" stroke-width="1"/>
<rect x="1381.5" y="781.5" width="35.5" height="21.5" rx="4" fill="#262626" />
<rect x="1386" y="785" width="11" height="5.5" rx="1.5" fill="#d8d8d8" />
<rect x="1386" y="793" width="11" height="5.5" rx="1.5" fill="#d8d8d8" />
<path d="M1399,787 Q1403,791 1399,796" fill="none" stroke="#bbb" stroke-width="1" />
<path d="M1407.2,791.1 L1410,793.9 L1412.8,791.1" fill="none" stroke="#cfcfcf" stroke-width="1.2" stroke-linecap="round" stroke-linejoin="round"/>
<rect x="1417" y="781.5" width="108" height="21.5" rx="0" fill="#1d1d1d" />
<text x="1426" y="797" font-size="14" fill="#e6e6e6" text-anchor="start" >colle_combine</text>
<rect x="1524" y="781.5" width="70" height="21.5" rx="4" fill="#4d4d4d" />
<rect x="1547.6" y="781.5" width="23.4" height="21.5" rx="0" fill="#3a3a3a" />
<path d="M1530,786.5 Q1536,784.5 1542,786.5 V792 Q1542,797.5 1536,799.5 Q1530,797.5 1530,792 Z" fill="none" stroke="#bbb" stroke-width="1.3" />
<path d="M1553,789 H1561 V799 H1553 Z M1556,789 V786 H1563 L1566,789 V796 H1561" fill="none" stroke="#5e5e5e" stroke-width="1.2" />
<path d="M1577,787 L1587,797 M1587,787 L1577,797" fill="none" stroke="#e0e0e0" stroke-width="1.5" />
<g transform="translate(1611,792) rotate(45)" fill="none" stroke="#bbb" stroke-width="1.3"><path d="M-4.5,-8 H4.5 M-2.5,-8 V-1 M2.5,-8 V-1 M-5,-1 H5 M0,-1 V8"/></g>
<rect x="1924" y="781.5" width="22" height="21.5" rx="4" fill="#2c2c2c" />
<path d="M1931,798 V787 M1931,787 l-3,3 M1931,787 l3,3 M1931,798 H1940" fill="none" stroke="#555" stroke-width="1.2" />
<rect x="1952.8" y="781.5" width="23" height="21.5" rx="4" fill="#4d4d4d" />
<g transform="translate(1964,792.5) rotate(45)"><path d="M-5,5 V-1 A5,5 0 0 1 5,-1 V5" fill="none" stroke="#aaa" stroke-width="2.6"/><path d="M-5,5 V-1 A5,5 0 0 1 5,-1 V5" fill="none" stroke="#4d4d4d" stroke-width="0.9"/></g>
<rect x="1981.7" y="781.5" width="45.299999999999955" height="21.5" rx="4" fill="#232323" stroke="#333" stroke-width="1"/>
<rect x="1981.7" y="781.5" width="22.7" height="21.5" rx="4" fill="#4772b3" />
<circle cx="1996" cy="790" r="5" fill="#eef2fa"/>
<path d="M1988,792 A6,6 0 0 0 1996,800" fill="none" stroke="#eef2fa" stroke-width="1.6" />
<path d="M2012.7,791.1 L2015.5,793.9 L2018.3,791.1" fill="none" stroke="#cfcfcf" stroke-width="1.2" stroke-linecap="round" stroke-linejoin="round"/>
<path d="M980.5,840 L983.5,843 L980.5,846" fill="none" stroke="#888" stroke-width="1.2" stroke-linecap="round" stroke-linejoin="round"/>
<path d="M2046,840 L2043,843 L2046,846" fill="none" stroke="#888" stroke-width="1.2" />
<rect x="2044" y="810" width="3" height="470" rx="0" fill="#262626" />
<path d="M1001,827 V824 H1004 M1014,824 H1017 V827 M1001,838 V841 H1004 M1014,841 H1017 V838" fill="none" stroke="#a8a8a8" stroke-width="1.2" />
<rect x="1004" y="827" width="10" height="10.5" rx="0" fill="#e0e0e0" />
<text x="1028" y="838" font-size="14" fill="#d9d9d9" text-anchor="start" >Cube</text>
<path d="M1081.5,829 L1085.5,833 L1081.5,837" fill="none" stroke="#cfcfcf" stroke-width="1.3" stroke-linecap="round" stroke-linejoin="round"/>
<circle cx="1099.5" cy="826" r="2" fill="#c8c8c8"/><circle cx="1104" cy="827" r="2" fill="#c8c8c8"/><circle cx="1102" cy="832" r="2.6" fill="#d8d8d8"/><circle cx="1109.5" cy="836" r="4" fill="#f0f0f0"/>
<text x="1125.5" y="838" font-size="14" fill="#d9d9d9" text-anchor="start" >GeometryNodes</text>
<path d="M1246.5,829 L1250.5,833 L1246.5,837" fill="none" stroke="#cfcfcf" stroke-width="1.3" stroke-linecap="round" stroke-linejoin="round"/>
<rect x="1264" y="825" width="11" height="5.5" rx="1.5" fill="#d8d8d8" />
<rect x="1264" y="834" width="11" height="5.5" rx="1.5" fill="#d8d8d8" />
<path d="M1277,828 Q1282,833 1277,838" fill="none" stroke="#bbb" stroke-width="1" />
<text x="1291" y="838" font-size="14" fill="#d9d9d9" text-anchor="start" >colle_combine</text>
<defs><filter id="sh" x="-10%" y="-10%" width="120%" height="130%"><feDropShadow dx="0" dy="2" stdDeviation="3" flood-color="#000" flood-opacity="0.55"/></filter></defs>
<path d="M1253.8,991.5 L1285.6,990.5" fill="none" stroke="#1fc59a" stroke-width="3" />
<path d="M1467,990.5 L1517.4,988" fill="none" stroke="#1fc59a" stroke-width="3" />
<path d="M1697.2,988 L1749.4,980.5" fill="none" stroke="#1fa888" stroke-width="4" />
<path d="M1697.2,988 L1749.4,980.5" fill="none" stroke="#b8f0dc" stroke-width="2" />
<g filter="url(#sh)"><rect x="1073.3" y="949.5" width="179.9000000000001" height="175.29999999999995" rx="6" fill="#303030"/></g>
<path d="M1073.3,974.7 V955.5 Q1073.3,949.5 1079.3,949.5 H1247.2 Q1253.2,949.5 1253.2,955.5 V974.7 Z" fill="#a3344f"/>
<path d="M1087.5,957.25 L1093,962.75 L1098.5,957.25" fill="none" stroke="#f0d8dc" stroke-width="1.5" stroke-linecap="round" stroke-linejoin="round"/>
<text x="1106" y="967" font-size="13.5" fill="#f2f2f2" text-anchor="start" >コレクション情報</text>
<text x="1238.5" y="997" font-size="13.5" fill="#e0e0e0" text-anchor="end" >インスタンス</text>
<circle cx="1253.8" cy="991.5" r="5.8" fill="#1fc59a" stroke="#111" stroke-width="0.8"/>
<rect x="1085.6" y="1014" width="155" height="23.7" rx="4" fill="#545454" />
<path d="M1089.6,1014 H1161.5 V1037.7 H1089.6 Q1085.6,1037.7 1085.6,1033.7 V1018 Q1085.6,1014 1089.6,1014 Z" fill="#4772b3" stroke="none" stroke-width="1" />
<text x="1088" y="1031" font-size="13.5" fill="#f0f0f0" text-anchor="start" >オリジナ...</text>
<text x="1201" y="1031" font-size="13.5" fill="#e6e6e6" text-anchor="middle" >相対</text>
<rect x="1085.6" y="1042.8" width="155" height="22.2" rx="4" fill="#1c1c1c" />
<rect x="1091.5" y="1046" width="17" height="4" rx="0.5" fill="#e0e0e0" />
<rect x="1092.5" y="1051.5" width="15" height="10" rx="0.5" fill="#e0e0e0" />
<rect x="1097.5" y="1054" width="5" height="1.8" rx="0.9" fill="#1c1c1c" />
<text x="1117.5" y="1060" font-size="14" fill="#e6e6e6" text-anchor="start" >Mesh</text>
<path d="M1221,1049 L1231,1059 M1231,1049 L1221,1059" fill="none" stroke="#cfcfcf" stroke-width="1.4" />
<circle cx="1072.7" cy="1053.5" r="5.8" fill="#f0f0f0" stroke="#111" stroke-width="0.8"/>
<rect x="1085.6" y="1071.5" width="16.5" height="17.5" rx="3" fill="#545454" />
<text x="1106" y="1086" font-size="13.5" fill="#e0e0e0" text-anchor="start" >子を分離</text>
<circle cx="1072.7" cy="1079.7" r="5.8" fill="#cca6d6" stroke="#111" stroke-width="0.8"/>
<rect x="1085.6" y="1098" width="16.5" height="17.5" rx="3" fill="#545454" />
<text x="1106" y="1112" font-size="13.5" fill="#e0e0e0" text-anchor="start" >子をリセット</text>
<circle cx="1072.7" cy="1106.5" r="5.8" fill="#cca6d6" stroke="#111" stroke-width="0.8"/>
<g filter="url(#sh)"><rect x="1286.6" y="949.5" width="179.4000000000001" height="138.0" rx="6" fill="#303030"/></g>
<path d="M1286.6,974.7 V955.5 Q1286.6,949.5 1292.6,949.5 H1460 Q1466,949.5 1466,955.5 V974.7 Z" fill="#237a5e"/>
<path d="M1300.5,957.25 L1306,962.75 L1311.5,957.25" fill="none" stroke="#e0f0ea" stroke-width="1.5" stroke-linecap="round" stroke-linejoin="round"/>
<text x="1318.5" y="967" font-size="13.5" fill="#f2f2f2" text-anchor="start" >インスタンス実体化</text>
<text x="1299" y="996" font-size="13.5" fill="#e0e0e0" text-anchor="start" >ジオメトリ</text>
<circle cx="1285.6" cy="990.5" r="5.8" fill="#1fc59a" stroke="#111" stroke-width="0.8"/>
<circle cx="1467" cy="990.5" r="5.8" fill="#1fc59a" stroke="#111" stroke-width="0.8"/>
<text x="1299" y="1023.5" font-size="13.5" fill="#e0e0e0" text-anchor="start" >選択</text>
<path d="M1285.6,1010.5 L1292.1,1017 L1285.6,1023.5 L1279.1,1017 Z" fill="#cca6d6" stroke="#111" stroke-width="0.8"/>
<circle cx="1285.6" cy="1017" r="1" fill="#222"/>
<rect x="1299" y="1036" width="17" height="17" rx="3" fill="#4772b3" />
<path d="M1302.5,1044.5 L1306.5,1048.5 L1313,1040" fill="none" stroke="#fff" stroke-width="1.8" />
<text x="1320.5" y="1050" font-size="13.5" fill="#e0e0e0" text-anchor="start" >すべて実体化</text>
<path d="M1285.6,1036.9 L1292.1,1043.4 L1285.6,1049.9 L1279.1,1043.4 Z" fill="#cca6d6" stroke="#111" stroke-width="0.8"/>
<circle cx="1285.6" cy="1043.4" r="1" fill="#222"/>
<rect x="1299" y="1059.2" width="153.7" height="23.6" rx="4" fill="#545454" />
<text x="1318.5" y="1076" font-size="13.5" fill="#e6e6e6" text-anchor="start" >深度</text>
<text x="1436" y="1076" font-size="14" fill="#e6e6e6" text-anchor="end" >0</text>
<path d="M1285.6,1064.0 L1292.1,1070.5 L1285.6,1077.0 L1279.1,1070.5 Z" fill="#5a9a5a" stroke="#111" stroke-width="0.8"/>
<circle cx="1285.6" cy="1070.5" r="1" fill="#222"/>
<g filter="url(#sh)"><rect x="1517.4" y="947.7" width="179.79999999999995" height="110.59999999999991" rx="6" fill="#303030"/></g>
<path d="M1517.4,971.6 V953.7 Q1517.4,947.7 1523.4,947.7 H1691.2 Q1697.2,947.7 1697.2,953.7 V971.6 Z" fill="#237a5e"/>
<path d="M1530.5,955.25 L1536,960.75 L1541.5,955.25" fill="none" stroke="#e0f0ea" stroke-width="1.5" stroke-linecap="round" stroke-linejoin="round"/>
<text x="1549" y="964" font-size="13.5" fill="#f2f2f2" text-anchor="start" >マテリアル設定</text>
<text x="1530.5" y="993" font-size="13.5" fill="#e0e0e0" text-anchor="start" >ジオメトリ</text>
<circle cx="1517.4" cy="988" r="5.8" fill="#1fc59a" stroke="#111" stroke-width="0.8"/>
<circle cx="1697.2" cy="988" r="5.8" fill="#1fc59a" stroke="#111" stroke-width="0.8"/>
<text x="1530.5" y="1020" font-size="13.5" fill="#e0e0e0" text-anchor="start" >選択</text>
<path d="M1517.4,1008.5 L1523.9,1015 L1517.4,1021.5 L1510.9,1015 Z" fill="#cca6d6" stroke="#111" stroke-width="0.8"/>
<circle cx="1517.4" cy="1015" r="1" fill="#222"/>
<rect x="1531.5" y="1031.3" width="151.5" height="21.1" rx="4" fill="#1c1c1c" />
<circle cx="1544" cy="1041.8" r="7.5" fill="#e0e0e0"/>
<path d="M1544,1041.8 V1034.3 A7.5,7.5 0 0 1 1551.5,1041.8 Z" fill="#1c1c1c" stroke="none" stroke-width="1" />
<path d="M1544,1041.8 H1536.5 A7.5,7.5 0 0 0 1544,1049.3 Z" fill="#1c1c1c" stroke="none" stroke-width="1" />
<circle cx="1544" cy="1041.8" r="7.5" fill="none" stroke="#e0e0e0" stroke-width="1.4"/>
<text x="1563" y="1047" font-size="14" fill="#e6e6e6" text-anchor="start" >white</text>
<path d="M1665,1037 L1675,1047 M1675,1037 L1665,1047" fill="none" stroke="#cfcfcf" stroke-width="1.4" />
<circle cx="1517.4" cy="1041.4" r="5.8" fill="#e8707e" stroke="#111" stroke-width="0.8"/>
<g filter="url(#sh)"><rect x="1749.4" y="936.9" width="181.19999999999982" height="89.69999999999993" rx="6" fill="#303030"/></g>
<path d="M1749.4,962.7 V942.9 Q1749.4,936.9 1755.4,936.9 H1924.6 Q1930.6,936.9 1930.6,942.9 V962.7 Z" fill="#1f1f1f"/>
<rect x="1749.4" y="936.9" width="181.19999999999982" height="89.69999999999993" rx="6" fill="none" stroke="#d8d8d8" stroke-width="1.6"/>
<path d="M1762.5,944.75 L1768,950.25 L1773.5,944.75" fill="none" stroke="#e0e0e0" stroke-width="1.5" stroke-linecap="round" stroke-linejoin="round"/>
<text x="1781" y="955" font-size="13.5" fill="#f2f2f2" text-anchor="start" >グループ出力</text>
<text x="1763.5" y="986" font-size="13.5" fill="#e0e0e0" text-anchor="start" >ジオメトリ</text>
<circle cx="1749.4" cy="980.5" r="5.8" fill="#1fc59a" stroke="#111" stroke-width="0.8"/>
<circle cx="1749.4" cy="1006.7" r="4.8" fill="#3a3a3a" stroke="#6a6a6a" stroke-width="1.2"/></svg>
</body></html>
